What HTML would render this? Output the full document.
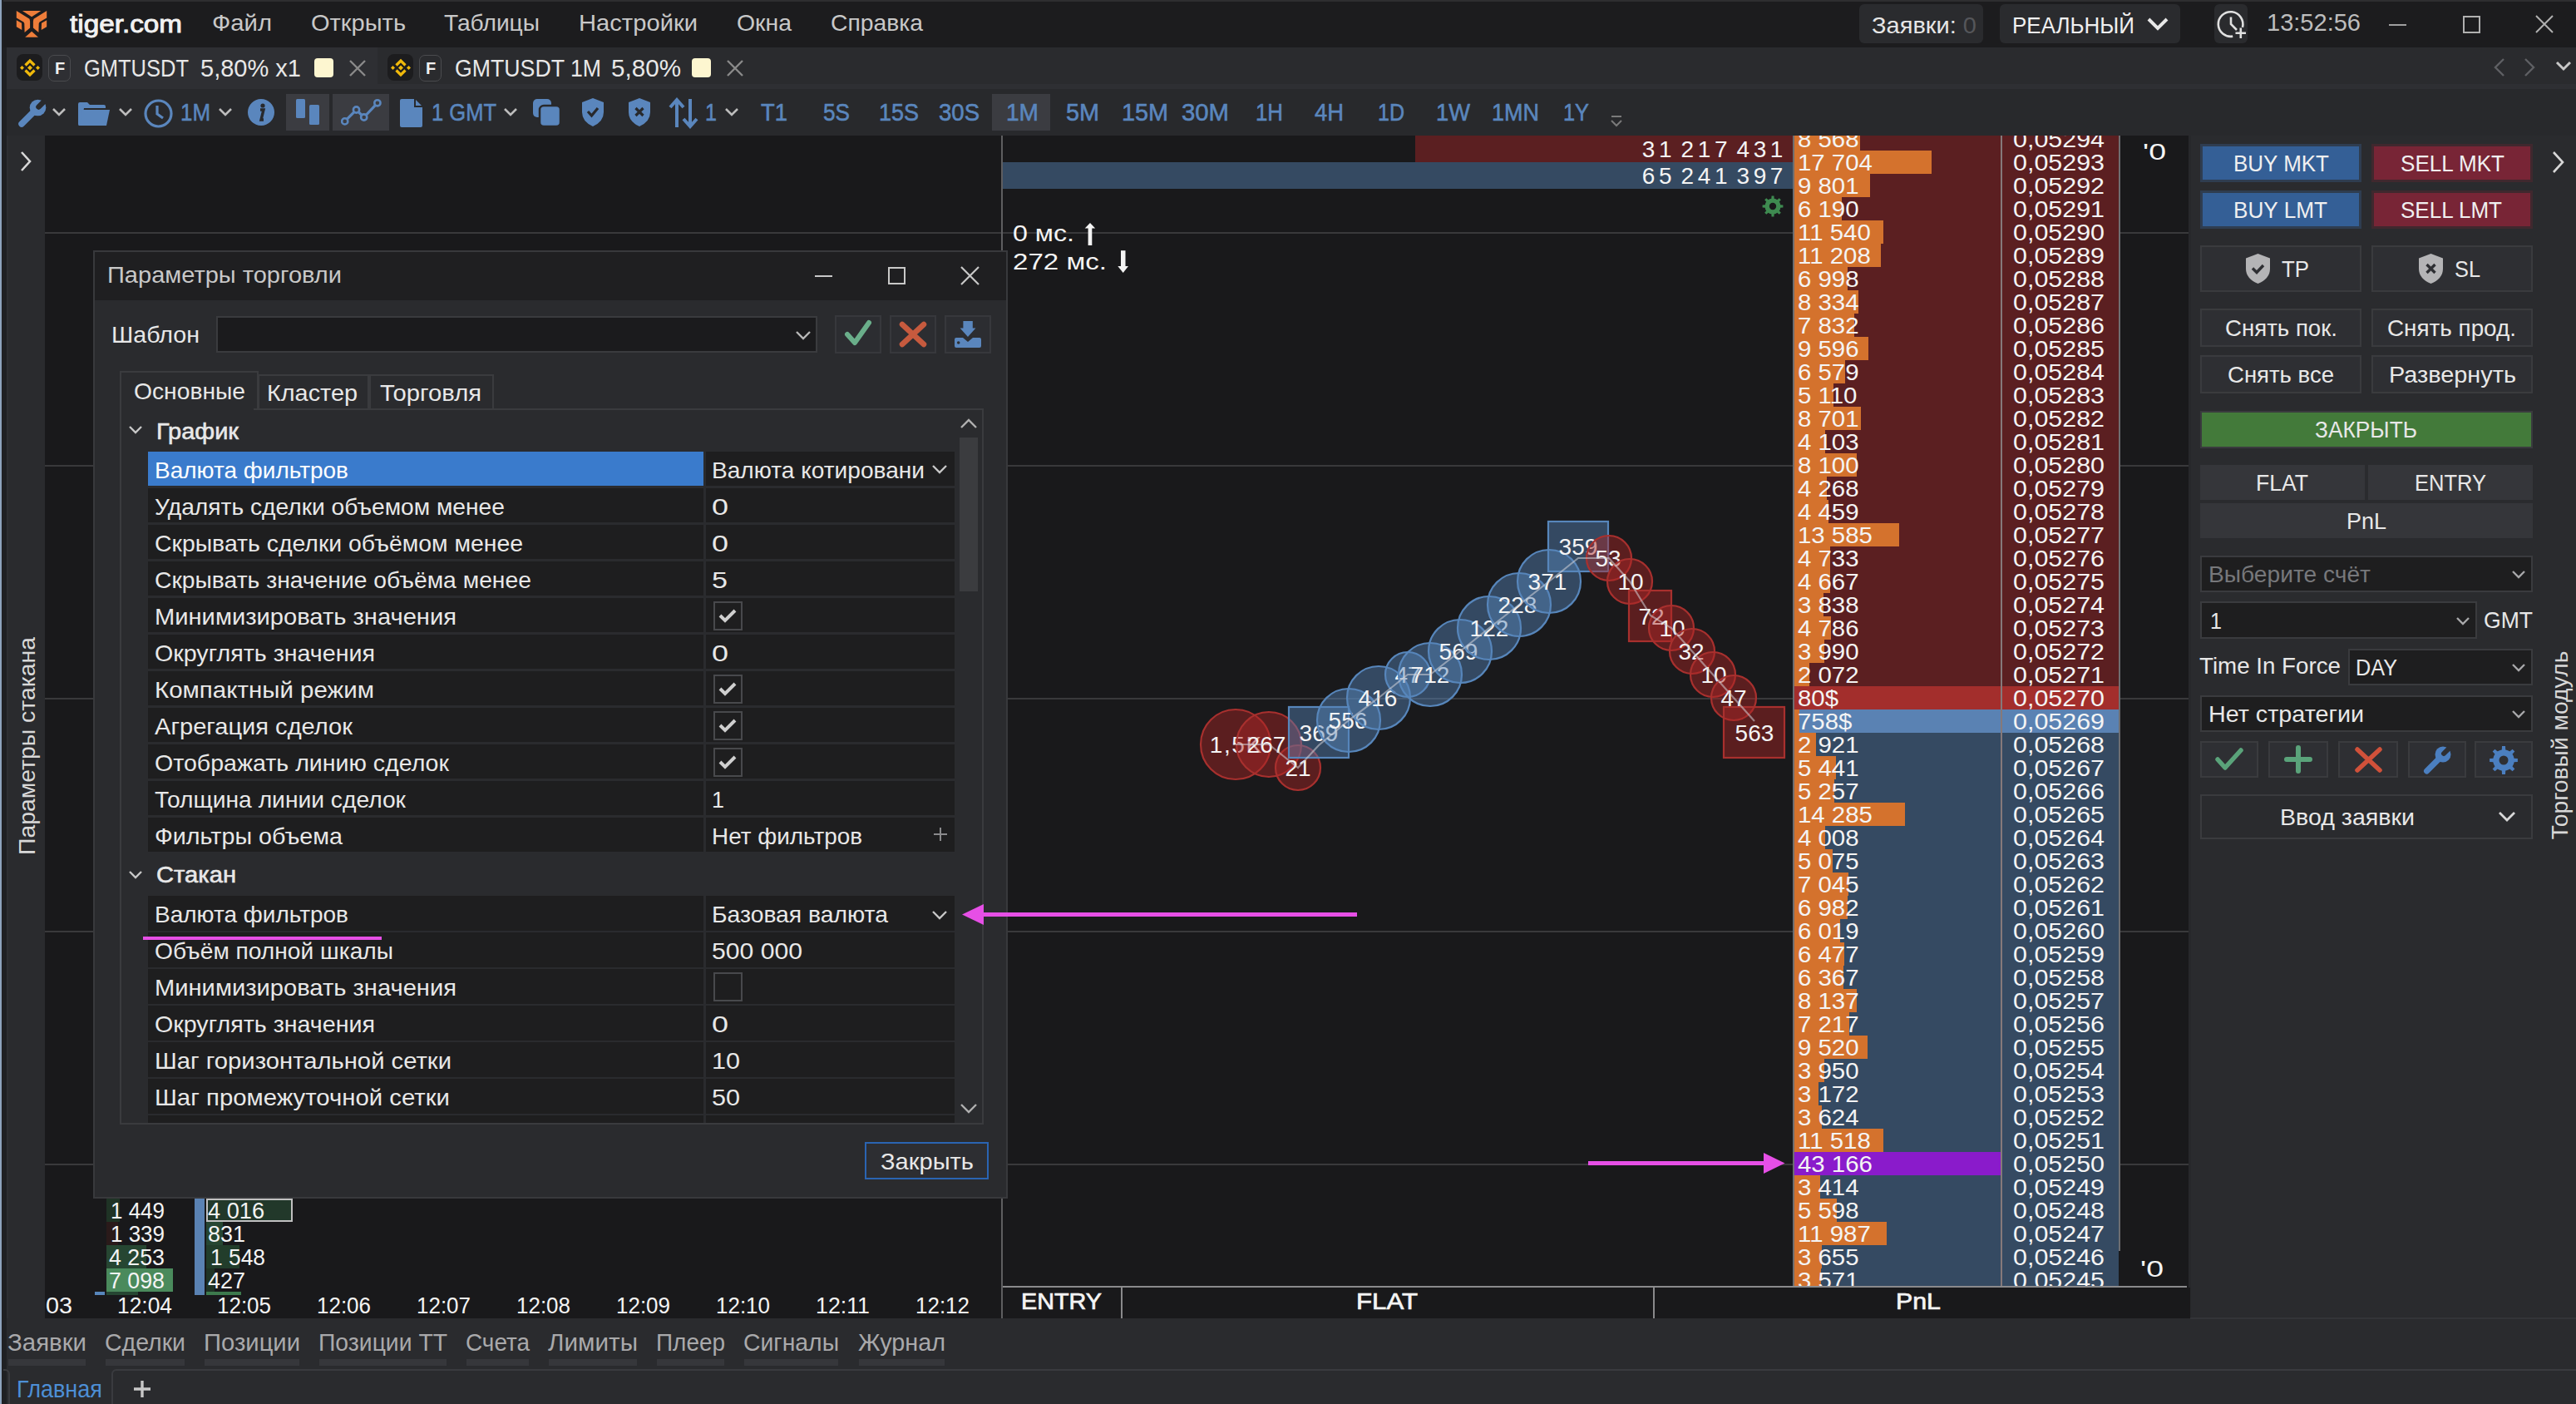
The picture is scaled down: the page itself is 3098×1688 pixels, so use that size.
<!DOCTYPE html>
<html><head><meta charset="utf-8"><title>tiger.com</title>
<style>
html,body{margin:0;padding:0;}
body{width:3098px;height:1688px;overflow:hidden;position:relative;background:#2a2b2e;font-family:"Liberation Sans",sans-serif;}
.a{position:absolute;}
.t{position:absolute;white-space:pre;line-height:1;}
.l{position:absolute;white-space:pre;line-height:1;transform:translateY(-50%);}
.r{position:absolute;white-space:pre;line-height:1;transform:translate(-100%,-50%);}
.c{position:absolute;white-space:pre;line-height:1;transform:translate(-50%,-50%);}
svg{display:block;}
</style></head><body>
<div class='a' style='left:0px;top:0px;width:2px;height:1688px;background:#8ea3bd;'></div>
<div class='a' style='left:2px;top:0px;width:6px;height:1688px;background:#1f2023;'></div>
<div class='a' style='left:4px;top:0px;width:3094px;height:57px;background:#1c1c1e;'></div>
<div class='a' style='left:4px;top:0px;width:3094px;height:2px;background:#2e2e30;'></div>
<svg class='a' style='left:14px;top:8px;' width='50' height='42' viewBox='0 0 50 42'>
<g fill='#ee7d3a'>
<path d='M12.9 4.9 L35.3 4.9 L24.1 12.3 Z'/>
<path d='M5.8 4.9 L21.5 14.7 L22.1 17.4 L22.1 25.4 L15.6 31.1 L15.3 20.3 L14.4 18.6 L5.8 13.5 Z'/>
<path d='M42.2 4.9 L26.5 14.7 L25.9 17.4 L25.9 25.4 L32.4 31.1 L32.7 20.3 L33.6 18.6 L42.2 13.5 Z'/>
<path d='M5.8 16.2 L12 19.7 L12.3 28.1 L5.8 24.2 Z'/>
<path d='M42.2 16.2 L36 19.7 L35.7 28.1 L42.2 24.2 Z'/>
<path d='M16.2 36.7 L24.1 29.8 L32 36.7 Z'/>
</g></svg>
<div class='a' style='left:84px;top:29px;font-size:29px;color:#f2f2f2;white-space:pre;line-height:1;transform-origin:0 0;transform:scaleX(1.1474) translateY(-50%);-webkit-text-stroke:0.9px #f2f2f2'>tiger.com</div>
<div class='a' style='left:255px;top:28px;font-size:28px;color:#c8c8c8;white-space:pre;line-height:1;transform-origin:0 0;transform:scaleX(1.0458) translateY(-50%);'>Файл</div>
<div class='a' style='left:374px;top:28px;font-size:28px;color:#c8c8c8;white-space:pre;line-height:1;transform-origin:0 0;transform:scaleX(1.0367) translateY(-50%);'>Открыть</div>
<div class='a' style='left:534px;top:28px;font-size:28px;color:#c8c8c8;white-space:pre;line-height:1;transform-origin:0 0;transform:scaleX(1.0057) translateY(-50%);'>Таблицы</div>
<div class='a' style='left:696px;top:28px;font-size:28px;color:#c8c8c8;white-space:pre;line-height:1;transform-origin:0 0;transform:scaleX(1.0415) translateY(-50%);'>Настройки</div>
<div class='a' style='left:886px;top:28px;font-size:28px;color:#c8c8c8;white-space:pre;line-height:1;transform-origin:0 0;transform:scaleX(1.0143) translateY(-50%);'>Окна</div>
<div class='a' style='left:999px;top:28px;font-size:28px;color:#c8c8c8;white-space:pre;line-height:1;transform-origin:0 0;transform:scaleX(1.0105) translateY(-50%);'>Справка</div>
<div class='a' style='left:2236px;top:5px;width:149px;height:47px;background:#2a2b2e;border-radius:6px'></div>
<div class='a' style='left:2251px;top:31px;font-size:28px;color:#e6e6e6;white-space:pre;line-height:1;transform-origin:0 0;transform:scaleX(1.0366) translateY(-50%);'>Заявки: <span style="color:#55565a">0</span></div>
<div class='a' style='left:2405px;top:5px;width:217px;height:47px;background:#2a2b2e;border-radius:6px'></div>
<div class='a' style='left:2420px;top:31px;font-size:28px;color:#f0f0f0;white-space:pre;line-height:1;transform-origin:0 0;transform:scaleX(0.9273) translateY(-50%);'>РЕАЛЬНЫЙ</div>
<svg class='a' style='left:2581px;top:19px;' width='28' height='20' viewBox='0 0 28 20'><path d='M3 4 L14 15 L25 4' stroke='#e8e8e8' stroke-width='4' fill='none'/></svg>
<div class='a' style='left:2663px;top:5px;width:40px;height:47px;background:#2a2b2e;border-radius:6px'></div>
<svg class='a' style='left:2664px;top:10px;' width='42' height='42' viewBox='0 0 42 42'><path d='M32.9 22.8 A14.8 14.8 0 1 0 21.2 33.6' stroke='#e0e0e0' stroke-width='2.6' fill='none'/><path d='M19 10.4 V19 L26 26' stroke='#e0e0e0' stroke-width='2.6' fill='none'/><path d='M30.8 23.5 V36 M24.5 29.8 H37' stroke='#e0e0e0' stroke-width='2.6'/></svg>
<div class='a' style='left:2726px;top:27px;font-size:29px;color:#bdbdbd;white-space:pre;line-height:1;transform-origin:0 0;transform:scaleX(1.0010) translateY(-50%);'>13:52:56</div>
<div class='a' style='left:2873px;top:29px;width:21px;height:2px;background:#a0a0a0;'></div>
<div class='a' style='left:2962px;top:19px;width:17px;height:17px;border:2px solid #b0b0b0'></div>
<svg class='a' style='left:3048px;top:17px;' width='24' height='24' viewBox='0 0 24 24'><path d='M2 2 L22 22 M22 2 L2 22' stroke='#b0b0b0' stroke-width='2'/></svg>
<div class='a' style='left:8px;top:57px;width:3090px;height:44px;background:#2a2b2e;'></div>
<div class='a' style='left:8px;top:57px;width:446px;height:44px;background:#2e2f33;'></div>
<div class='a' style='left:8px;top:101px;width:3090px;height:6px;background:#2e2f33;'></div>
<div class='a' style='left:20px;top:65px;width:31px;height:32px;background:#1c1c1e;border-radius:8px'></div>
<svg class='a' style='left:23px;top:69px;' width='26' height='25' viewBox='0 0 26 25'>
<g fill='none' stroke='#f0b90b' stroke-width='3.2' stroke-linejoin='miter'>
<path d='M7.5 9.5 L13 4 L18.5 9.5'/>
<path d='M7.5 15.5 L13 21 L18.5 15.5'/>
</g>
<g fill='#f0b90b'>
<path d='M1 12.5 L3.5 10 L6 12.5 L3.5 15 Z'/>
<path d='M25 12.5 L22.5 10 L20 12.5 L22.5 15 Z'/>
<path d='M13 9.5 L16 12.5 L13 15.5 L10 12.5 Z'/>
</g>
</svg>
<div class='a' style='left:58px;top:66px;width:25px;height:30px;border:1.5px solid #4a4b4e;border-radius:7px'></div>
<div class='c' style='left:72px;top:82px;font-size:20px;color:#f0f0f0;font-weight:bold'>F</div>
<div class='a' style='left:101px;top:82px;font-size:30px;color:#e8e8e8;white-space:pre;line-height:1;transform-origin:0 0;transform:scaleX(0.8495) translateY(-50%);'>GMTUSDT</div>
<div class='a' style='left:241px;top:82px;font-size:30px;color:#e8e8e8;white-space:pre;line-height:1;transform-origin:0 0;transform:scaleX(0.9674) translateY(-50%);'>5,80% x1</div>
<div class='a' style='left:378px;top:70px;width:23px;height:23px;background:#fdf6d0;border-radius:4px'></div>
<svg class='a' style='left:420px;top:72px;' width='20' height='20' viewBox='0 0 20 20'><path d='M1 1 L19 19 M19 1 L1 19' stroke='#8a8a8a' stroke-width='2.4'/></svg>
<div class='a' style='left:466px;top:65px;width:31px;height:32px;background:#1c1c1e;border-radius:8px'></div>
<svg class='a' style='left:469px;top:69px;' width='26' height='25' viewBox='0 0 26 25'>
<g fill='none' stroke='#f0b90b' stroke-width='3.2' stroke-linejoin='miter'>
<path d='M7.5 9.5 L13 4 L18.5 9.5'/>
<path d='M7.5 15.5 L13 21 L18.5 15.5'/>
</g>
<g fill='#f0b90b'>
<path d='M1 12.5 L3.5 10 L6 12.5 L3.5 15 Z'/>
<path d='M25 12.5 L22.5 10 L20 12.5 L22.5 15 Z'/>
<path d='M13 9.5 L16 12.5 L13 15.5 L10 12.5 Z'/>
</g>
</svg>
<div class='a' style='left:504px;top:66px;width:25px;height:30px;border:1.5px solid #4a4b4e;border-radius:7px'></div>
<div class='c' style='left:518px;top:82px;font-size:20px;color:#f0f0f0;font-weight:bold'>F</div>
<div class='a' style='left:547px;top:82px;font-size:30px;color:#e8e8e8;white-space:pre;line-height:1;transform-origin:0 0;transform:scaleX(0.8899) translateY(-50%);'>GMTUSDT 1M</div>
<div class='a' style='left:735px;top:82px;font-size:30px;color:#e8e8e8;white-space:pre;line-height:1;transform-origin:0 0;transform:scaleX(0.9875) translateY(-50%);'>5,80%</div>
<div class='a' style='left:832px;top:70px;width:23px;height:23px;background:#fdf6d0;border-radius:4px'></div>
<svg class='a' style='left:874px;top:72px;' width='20' height='20' viewBox='0 0 20 20'><path d='M1 1 L19 19 M19 1 L1 19' stroke='#8a8a8a' stroke-width='2.4'/></svg>
<svg class='a' style='left:2998px;top:69px;' width='16' height='24' viewBox='0 0 16 24'><path d='M13 2 L3 12 L13 22' stroke='#5f6064' stroke-width='2.4' fill='none'/></svg>
<svg class='a' style='left:3034px;top:69px;' width='16' height='24' viewBox='0 0 16 24'><path d='M3 2 L13 12 L3 22' stroke='#5f6064' stroke-width='2.4' fill='none'/></svg>
<svg class='a' style='left:3073px;top:73px;' width='20' height='14' viewBox='0 0 20 14'><path d='M2 2 L10 10 L18 2' stroke='#c8c8c8' stroke-width='3' fill='none'/></svg>
<div class='a' style='left:8px;top:107px;width:3090px;height:56px;background:#28292c;'></div>
<svg class='a' style='left:21px;top:118px;' width='36' height='36' viewBox='0 0 36 36'><path d='M5 31 L19 17' stroke='#5a86bd' stroke-width='7.5' stroke-linecap='round'/><circle cx='24.5' cy='11.5' r='9.8' fill='#5a86bd'/><path d='M25.5 10.5 L37 -1' stroke='#28292c' stroke-width='6.5' stroke-linecap='round'/></svg>
<svg class='a' style='left:62px;top:129px;' width='18' height='12' viewBox='0 0 18 12'><path d='M2 2 L9 9 L16 2' stroke='#bdbdbd' stroke-width='2.6' fill='none'/></svg>
<svg class='a' style='left:93px;top:121px;' width='40' height='32' viewBox='0 0 40 32'><path d='M1 4 Q1 2 3 2 L12 2 L15 5 L32 5 Q34 5 34 7 L34 9 L8 9 L4 30 L2 30 Q1 30 1 28 Z' fill='#5a86bd'/><path d='M6 11 L39 11 L35 30 L3 30 Z' fill='#5a86bd'/></svg>
<svg class='a' style='left:142px;top:129px;' width='18' height='12' viewBox='0 0 18 12'><path d='M2 2 L9 9 L16 2' stroke='#bdbdbd' stroke-width='2.6' fill='none'/></svg>
<svg class='a' style='left:172px;top:118px;' width='37' height='37' viewBox='0 0 37 37'><circle cx='18.5' cy='18.5' r='15.5' stroke='#5a86bd' stroke-width='3.2' fill='none'/><path d='M17 9 V19 L24 24' stroke='#5a86bd' stroke-width='3.2' fill='none'/></svg>
<div class='a' style='left:217px;top:135px;font-size:30px;color:#5a86bd;white-space:pre;line-height:1;transform-origin:0 0;transform:scaleX(0.8638) translateY(-50%);-webkit-text-stroke:0.6px #5a86bd'>1M</div>
<svg class='a' style='left:262px;top:129px;' width='18' height='12' viewBox='0 0 18 12'><path d='M2 2 L9 9 L16 2' stroke='#bdbdbd' stroke-width='2.6' fill='none'/></svg>
<svg class='a' style='left:297px;top:118px;' width='34' height='34' viewBox='0 0 34 34'><circle cx='17' cy='17' r='16' fill='#5a86bd'/><circle cx='19' cy='9' r='2.6' fill='#28292c'/><path d='M16 14 L20 14 L17 26 L20 26' stroke='#28292c' stroke-width='3.4' fill='none'/></svg>
<div class='a' style='left:344px;top:113px;width:52px;height:44px;background:#3b3c41;'></div>
<svg class='a' style='left:355px;top:118px;' width='32' height='34' viewBox='0 0 32 34'><rect x='1' y='1' width='11' height='23' rx='1.5' fill='#5a86bd'/><rect x='17' y='8' width='12' height='24' rx='1.5' fill='#5a86bd'/></svg>
<div class='a' style='left:400px;top:113px;width:68px;height:44px;background:#3b3c41;'></div>
<svg class='a' style='left:410px;top:117px;' width='50' height='34' viewBox='0 0 50 34'><path d='M4.7 28.9 L18.5 15 L27.7 24 L43.9 6.8' stroke='#5a86bd' stroke-width='3.2' fill='none'/><circle cx='4.7' cy='28.9' r='3.6' fill='#3b3c41' stroke='#5a86bd' stroke-width='2.6'/><circle cx='18.5' cy='15' r='3.6' fill='#3b3c41' stroke='#5a86bd' stroke-width='2.6'/><circle cx='27.7' cy='24' r='3.6' fill='#3b3c41' stroke='#5a86bd' stroke-width='2.6'/><circle cx='43.9' cy='6.8' r='3.6' fill='#3b3c41' stroke='#5a86bd' stroke-width='2.6'/></svg>
<svg class='a' style='left:480px;top:118px;' width='30' height='36' viewBox='0 0 30 36'><path d='M3 1 L19 1 L28 10 L28 33 Q28 35 26 35 L3 35 Q1 35 1 33 L1 3 Q1 1 3 1 Z' fill='#5a86bd'/><path d='M19 1 L19 10 L28 10' stroke='#28292c' stroke-width='2' fill='none'/></svg>
<div class='a' style='left:519px;top:135px;font-size:30px;color:#5a86bd;white-space:pre;line-height:1;transform-origin:0 0;transform:scaleX(0.8509) translateY(-50%);-webkit-text-stroke:0.6px #5a86bd'>1 GMT</div>
<svg class='a' style='left:605px;top:129px;' width='18' height='12' viewBox='0 0 18 12'><path d='M2 2 L9 9 L16 2' stroke='#bdbdbd' stroke-width='2.6' fill='none'/></svg>
<svg class='a' style='left:640px;top:118px;' width='35' height='35' viewBox='0 0 35 35'><rect x='1' y='1' width='22' height='22' rx='5' fill='#5a86bd'/><rect x='9' y='9' width='25' height='25' rx='5' fill='#5a86bd' stroke='#28292c' stroke-width='2.5'/></svg>
<svg class='a' style='left:699px;top:117px;' width='28' height='36' viewBox='0 0 28 36'><path d='M14 1 L27 6 L27 18 Q27 29 14 35 Q1 29 1 18 L1 6 Z' fill='#5a86bd'/><path d='M8 17 L12.5 22 L20 13' stroke='#28292c' stroke-width='3.2' fill='none'/></svg>
<svg class='a' style='left:755px;top:117px;' width='28' height='36' viewBox='0 0 28 36'><path d='M14 1 L27 6 L27 18 Q27 29 14 35 Q1 29 1 18 L1 6 Z' fill='#5a86bd'/><path d='M9.5 13 L18.5 22 M18.5 13 L9.5 22' stroke='#28292c' stroke-width='3.2'/></svg>
<svg class='a' style='left:804px;top:117px;' width='36' height='38' viewBox='0 0 36 38'><path d='M10 36 V4 M2 12 L10 3 L18 12' stroke='#5a86bd' stroke-width='4' fill='none'/><path d='M26 2 V34 M18 26 L26 35 L34 26' stroke='#5a86bd' stroke-width='4' fill='none'/></svg>
<div class='a' style='left:848px;top:135px;font-size:30px;color:#5a86bd;white-space:pre;line-height:1;transform-origin:0 0;transform:scaleX(0.8391) translateY(-50%);-webkit-text-stroke:0.6px #5a86bd'>1</div>
<svg class='a' style='left:871px;top:129px;' width='18' height='12' viewBox='0 0 18 12'><path d='M2 2 L9 9 L16 2' stroke='#bdbdbd' stroke-width='2.6' fill='none'/></svg>
<div class='a' style='left:1193px;top:113px;width:70px;height:44px;background:#3b3c41;'></div>
<div class='a' style='left:915px;top:135px;font-size:29px;color:#5a86bd;white-space:pre;line-height:1;transform-origin:0 0;transform:scaleX(0.9455) translateY(-50%);-webkit-text-stroke:0.6px #5a86bd'>T1</div>
<div class='a' style='left:990px;top:135px;font-size:29px;color:#5a86bd;white-space:pre;line-height:1;transform-origin:0 0;transform:scaleX(0.9021) translateY(-50%);-webkit-text-stroke:0.6px #5a86bd'>5S</div>
<div class='a' style='left:1057px;top:135px;font-size:29px;color:#5a86bd;white-space:pre;line-height:1;transform-origin:0 0;transform:scaleX(0.9302) translateY(-50%);-webkit-text-stroke:0.6px #5a86bd'>15S</div>
<div class='a' style='left:1129px;top:135px;font-size:29px;color:#5a86bd;white-space:pre;line-height:1;transform-origin:0 0;transform:scaleX(0.9496) translateY(-50%);-webkit-text-stroke:0.6px #5a86bd'>30S</div>
<div class='a' style='left:1210px;top:135px;font-size:29px;color:#5a86bd;white-space:pre;line-height:1;transform-origin:0 0;transform:scaleX(0.9681) translateY(-50%);-webkit-text-stroke:0.6px #5a86bd'>1M</div>
<div class='a' style='left:1282px;top:135px;font-size:29px;color:#5a86bd;white-space:pre;line-height:1;transform-origin:0 0;transform:scaleX(0.9929) translateY(-50%);-webkit-text-stroke:0.6px #5a86bd'>5M</div>
<div class='a' style='left:1349px;top:135px;font-size:29px;color:#5a86bd;white-space:pre;line-height:1;transform-origin:0 0;transform:scaleX(0.9927) translateY(-50%);-webkit-text-stroke:0.6px #5a86bd'>15M</div>
<div class='a' style='left:1421px;top:135px;font-size:29px;color:#5a86bd;white-space:pre;line-height:1;transform-origin:0 0;transform:scaleX(1.0104) translateY(-50%);-webkit-text-stroke:0.6px #5a86bd'>30M</div>
<div class='a' style='left:1510px;top:135px;font-size:29px;color:#5a86bd;white-space:pre;line-height:1;transform-origin:0 0;transform:scaleX(0.8902) translateY(-50%);-webkit-text-stroke:0.6px #5a86bd'>1H</div>
<div class='a' style='left:1581px;top:135px;font-size:29px;color:#5a86bd;white-space:pre;line-height:1;transform-origin:0 0;transform:scaleX(0.9442) translateY(-50%);-webkit-text-stroke:0.6px #5a86bd'>4H</div>
<div class='a' style='left:1657px;top:135px;font-size:29px;color:#5a86bd;white-space:pre;line-height:1;transform-origin:0 0;transform:scaleX(0.8632) translateY(-50%);-webkit-text-stroke:0.6px #5a86bd'>1D</div>
<div class='a' style='left:1727px;top:135px;font-size:29px;color:#5a86bd;white-space:pre;line-height:1;transform-origin:0 0;transform:scaleX(0.9425) translateY(-50%);-webkit-text-stroke:0.6px #5a86bd'>1W</div>
<div class='a' style='left:1794px;top:135px;font-size:29px;color:#5a86bd;white-space:pre;line-height:1;transform-origin:0 0;transform:scaleX(0.9310) translateY(-50%);-webkit-text-stroke:0.6px #5a86bd'>1MN</div>
<div class='a' style='left:1880px;top:135px;font-size:29px;color:#5a86bd;white-space:pre;line-height:1;transform-origin:0 0;transform:scaleX(0.8739) translateY(-50%);-webkit-text-stroke:0.6px #5a86bd'>1Y</div>
<svg class='a' style='left:1936px;top:138px;' width='16' height='16' viewBox='0 0 16 16'><path d='M2 2 H14' stroke='#7a7a7a' stroke-width='2'/><path d='M2 7 L8 13 L14 7' stroke='#7a7a7a' stroke-width='2' fill='none'/></svg>
<div class='a' style='left:8px;top:163px;width:46px;height:1422px;background:#2a2b2e;'></div>
<div class='a' style='left:8px;top:163px;width:2px;height:1422px;background:#2e2f33;'></div>
<svg class='a' style='left:23px;top:181px;' width='16' height='26' viewBox='0 0 16 26'><path d='M3 2 L13 13 L3 24' stroke='#d8d8d8' stroke-width='2.6' fill='none'/></svg>
<div class='a' style='left:33px;top:897px;transform:translate(-50%,-50%) rotate(-90deg) scaleX(1.05);white-space:pre;font-size:27px;line-height:1;color:#d8d8d8'>Параметры стакана</div>
<div class='a' style='left:54px;top:163px;width:1151px;height:1422px;background:#19191b;'></div>
<div class='a' style='left:54px;top:279px;width:1151px;height:2px;background:#39393b;'></div>
<div class='a' style='left:54px;top:559px;width:1151px;height:2px;background:#39393b;'></div>
<div class='a' style='left:54px;top:839px;width:1151px;height:2px;background:#39393b;'></div>
<div class='a' style='left:54px;top:1119px;width:1151px;height:2px;background:#39393b;'></div>
<div class='a' style='left:54px;top:1399px;width:1151px;height:2px;background:#39393b;'></div>
<div class='a' style='left:1205px;top:163px;width:1429px;height:1422px;background:#19191b;'></div>
<div class='a' style='left:1205px;top:279px;width:1429px;height:2px;background:#39393b;'></div>
<div class='a' style='left:1205px;top:559px;width:1429px;height:2px;background:#39393b;'></div>
<div class='a' style='left:1205px;top:839px;width:1429px;height:2px;background:#39393b;'></div>
<div class='a' style='left:1205px;top:1119px;width:1429px;height:2px;background:#39393b;'></div>
<div class='a' style='left:1205px;top:1399px;width:1429px;height:2px;background:#39393b;'></div>
<div class='a' style='left:1204px;top:163px;width:2px;height:1422px;background:#5e5e60;'></div>
<div class='a' style='left:2634px;top:163px;width:464px;height:1422px;background:#2a2b2e;'></div>
<div class='a' style='left:2632px;top:163px;width:3px;height:1422px;background:#27282b;'></div>
<div class='a' style='left:8px;top:1585px;width:3090px;height:61px;background:#2a2b2e;'></div>
<div class='a' style='left:9px;top:1614px;font-size:29px;color:#a9a9ab;white-space:pre;line-height:1;transform-origin:0 0;transform:scaleX(1.0145) translateY(-50%);'>Заявки</div>
<div class='a' style='left:10px;top:1634px;width:93px;height:8px;background:#36373b;'></div>
<div class='a' style='left:126px;top:1614px;font-size:29px;color:#a9a9ab;white-space:pre;line-height:1;transform-origin:0 0;transform:scaleX(0.9814) translateY(-50%);'>Сделки</div>
<div class='a' style='left:127px;top:1634px;width:95px;height:8px;background:#36373b;'></div>
<div class='a' style='left:245px;top:1614px;font-size:29px;color:#a9a9ab;white-space:pre;line-height:1;transform-origin:0 0;transform:scaleX(1.0074) translateY(-50%);'>Позиции</div>
<div class='a' style='left:246px;top:1634px;width:114px;height:8px;background:#36373b;'></div>
<div class='a' style='left:383px;top:1614px;font-size:29px;color:#a9a9ab;white-space:pre;line-height:1;transform-origin:0 0;transform:scaleX(0.9771) translateY(-50%);'>Позиции ТТ</div>
<div class='a' style='left:384px;top:1634px;width:153px;height:8px;background:#36373b;'></div>
<div class='a' style='left:560px;top:1614px;font-size:29px;color:#a9a9ab;white-space:pre;line-height:1;transform-origin:0 0;transform:scaleX(0.9627) translateY(-50%);'>Счета</div>
<div class='a' style='left:561px;top:1634px;width:75px;height:8px;background:#36373b;'></div>
<div class='a' style='left:659px;top:1614px;font-size:29px;color:#a9a9ab;white-space:pre;line-height:1;transform-origin:0 0;transform:scaleX(1.0238) translateY(-50%);'>Лимиты</div>
<div class='a' style='left:660px;top:1634px;width:106px;height:8px;background:#36373b;'></div>
<div class='a' style='left:789px;top:1614px;font-size:29px;color:#a9a9ab;white-space:pre;line-height:1;transform-origin:0 0;transform:scaleX(0.9634) translateY(-50%);'>Плеер</div>
<div class='a' style='left:790px;top:1634px;width:81px;height:8px;background:#36373b;'></div>
<div class='a' style='left:894px;top:1614px;font-size:29px;color:#a9a9ab;white-space:pre;line-height:1;transform-origin:0 0;transform:scaleX(0.9777) translateY(-50%);'>Сигналы</div>
<div class='a' style='left:895px;top:1634px;width:113px;height:8px;background:#36373b;'></div>
<div class='a' style='left:1032px;top:1614px;font-size:29px;color:#a9a9ab;white-space:pre;line-height:1;transform-origin:0 0;transform:scaleX(0.9922) translateY(-50%);'>Журнал</div>
<div class='a' style='left:1033px;top:1634px;width:103px;height:8px;background:#36373b;'></div>
<div class='a' style='left:8px;top:1648px;width:3090px;height:40px;background:#2a2b2e;'></div>
<div class='a' style='left:134px;top:1646px;width:2980px;height:60px;border:2px solid #3a3b3f;border-radius:6px 0 0 0'></div>
<div class='a' style='left:-80px;top:1646px;width:88px;height:60px;border:2px solid #3a3b3f;border-radius:0 6px 0 0'></div>
<div class='a' style='left:20px;top:1670px;font-size:29px;color:#4d8fd6;white-space:pre;line-height:1;transform-origin:0 0;transform:scaleX(0.9331) translateY(-50%);'>Главная</div>
<svg class='a' style='left:159px;top:1658px;' width='24' height='24' viewBox='0 0 24 24'><path d='M12 2 V22 M2 12 H22' stroke='#c8c8c8' stroke-width='3.4'/></svg>
<div class='a' style='left:2150px;top:163px;width:410px;height:1383px;overflow:hidden'>
<div class='a' style='left:7px;top:-9.7px;width:391px;height:28px;background:#5b1f21'></div>
<div class='a' style='left:7px;top:-9.7px;width:80.1px;height:28px;background:#d4722d'></div>
<div class='a' style='left:12px;top:4.8px;font-size:28px;color:#f4f4f4;white-space:pre;line-height:1;transform-origin:0 0;transform:scaleX(1.05) translateY(-50%)'>8 568</div>
<div class='a' style='left:271px;top:4.8px;font-size:28px;color:#f4f4f4;white-space:pre;line-height:1;transform-origin:0 0;transform:scaleX(1.0867) translateY(-50%)'>0,05294</div>
<div class='a' style='left:7px;top:18.3px;width:391px;height:28px;background:#5b1f21'></div>
<div class='a' style='left:7px;top:18.3px;width:165.5px;height:28px;background:#d4722d'></div>
<div class='a' style='left:12px;top:32.8px;font-size:28px;color:#f4f4f4;white-space:pre;line-height:1;transform-origin:0 0;transform:scaleX(1.05) translateY(-50%)'>17 704</div>
<div class='a' style='left:271px;top:32.8px;font-size:28px;color:#f4f4f4;white-space:pre;line-height:1;transform-origin:0 0;transform:scaleX(1.0867) translateY(-50%)'>0,05293</div>
<div class='a' style='left:7px;top:46.3px;width:391px;height:28px;background:#5b1f21'></div>
<div class='a' style='left:7px;top:46.3px;width:91.6px;height:28px;background:#d4722d'></div>
<div class='a' style='left:12px;top:60.8px;font-size:28px;color:#f4f4f4;white-space:pre;line-height:1;transform-origin:0 0;transform:scaleX(1.05) translateY(-50%)'>9 801</div>
<div class='a' style='left:271px;top:60.8px;font-size:28px;color:#f4f4f4;white-space:pre;line-height:1;transform-origin:0 0;transform:scaleX(1.0867) translateY(-50%)'>0,05292</div>
<div class='a' style='left:7px;top:74.3px;width:391px;height:28px;background:#5b1f21'></div>
<div class='a' style='left:7px;top:74.3px;width:57.9px;height:28px;background:#d4722d'></div>
<div class='a' style='left:12px;top:88.8px;font-size:28px;color:#f4f4f4;white-space:pre;line-height:1;transform-origin:0 0;transform:scaleX(1.05) translateY(-50%)'>6 190</div>
<div class='a' style='left:271px;top:88.8px;font-size:28px;color:#f4f4f4;white-space:pre;line-height:1;transform-origin:0 0;transform:scaleX(1.0867) translateY(-50%)'>0,05291</div>
<div class='a' style='left:7px;top:102.3px;width:391px;height:28px;background:#5b1f21'></div>
<div class='a' style='left:7px;top:102.3px;width:107.9px;height:28px;background:#d4722d'></div>
<div class='a' style='left:12px;top:116.8px;font-size:28px;color:#f4f4f4;white-space:pre;line-height:1;transform-origin:0 0;transform:scaleX(1.05) translateY(-50%)'>11 540</div>
<div class='a' style='left:271px;top:116.8px;font-size:28px;color:#f4f4f4;white-space:pre;line-height:1;transform-origin:0 0;transform:scaleX(1.0867) translateY(-50%)'>0,05290</div>
<div class='a' style='left:7px;top:130.3px;width:391px;height:28px;background:#5b1f21'></div>
<div class='a' style='left:7px;top:130.3px;width:104.7px;height:28px;background:#d4722d'></div>
<div class='a' style='left:12px;top:144.8px;font-size:28px;color:#f4f4f4;white-space:pre;line-height:1;transform-origin:0 0;transform:scaleX(1.05) translateY(-50%)'>11 208</div>
<div class='a' style='left:271px;top:144.8px;font-size:28px;color:#f4f4f4;white-space:pre;line-height:1;transform-origin:0 0;transform:scaleX(1.0867) translateY(-50%)'>0,05289</div>
<div class='a' style='left:7px;top:158.3px;width:391px;height:28px;background:#5b1f21'></div>
<div class='a' style='left:7px;top:158.3px;width:65.4px;height:28px;background:#d4722d'></div>
<div class='a' style='left:12px;top:172.8px;font-size:28px;color:#f4f4f4;white-space:pre;line-height:1;transform-origin:0 0;transform:scaleX(1.05) translateY(-50%)'>6 998</div>
<div class='a' style='left:271px;top:172.8px;font-size:28px;color:#f4f4f4;white-space:pre;line-height:1;transform-origin:0 0;transform:scaleX(1.0867) translateY(-50%)'>0,05288</div>
<div class='a' style='left:7px;top:186.3px;width:391px;height:28px;background:#5b1f21'></div>
<div class='a' style='left:7px;top:186.3px;width:77.9px;height:28px;background:#d4722d'></div>
<div class='a' style='left:12px;top:200.8px;font-size:28px;color:#f4f4f4;white-space:pre;line-height:1;transform-origin:0 0;transform:scaleX(1.05) translateY(-50%)'>8 334</div>
<div class='a' style='left:271px;top:200.8px;font-size:28px;color:#f4f4f4;white-space:pre;line-height:1;transform-origin:0 0;transform:scaleX(1.0867) translateY(-50%)'>0,05287</div>
<div class='a' style='left:7px;top:214.3px;width:391px;height:28px;background:#5b1f21'></div>
<div class='a' style='left:7px;top:214.3px;width:73.2px;height:28px;background:#d4722d'></div>
<div class='a' style='left:12px;top:228.8px;font-size:28px;color:#f4f4f4;white-space:pre;line-height:1;transform-origin:0 0;transform:scaleX(1.05) translateY(-50%)'>7 832</div>
<div class='a' style='left:271px;top:228.8px;font-size:28px;color:#f4f4f4;white-space:pre;line-height:1;transform-origin:0 0;transform:scaleX(1.0867) translateY(-50%)'>0,05286</div>
<div class='a' style='left:7px;top:242.3px;width:391px;height:28px;background:#5b1f21'></div>
<div class='a' style='left:7px;top:242.3px;width:89.7px;height:28px;background:#d4722d'></div>
<div class='a' style='left:12px;top:256.8px;font-size:28px;color:#f4f4f4;white-space:pre;line-height:1;transform-origin:0 0;transform:scaleX(1.05) translateY(-50%)'>9 596</div>
<div class='a' style='left:271px;top:256.8px;font-size:28px;color:#f4f4f4;white-space:pre;line-height:1;transform-origin:0 0;transform:scaleX(1.0867) translateY(-50%)'>0,05285</div>
<div class='a' style='left:7px;top:270.3px;width:391px;height:28px;background:#5b1f21'></div>
<div class='a' style='left:7px;top:270.3px;width:61.5px;height:28px;background:#d4722d'></div>
<div class='a' style='left:12px;top:284.8px;font-size:28px;color:#f4f4f4;white-space:pre;line-height:1;transform-origin:0 0;transform:scaleX(1.05) translateY(-50%)'>6 579</div>
<div class='a' style='left:271px;top:284.8px;font-size:28px;color:#f4f4f4;white-space:pre;line-height:1;transform-origin:0 0;transform:scaleX(1.0867) translateY(-50%)'>0,05284</div>
<div class='a' style='left:7px;top:298.3px;width:391px;height:28px;background:#5b1f21'></div>
<div class='a' style='left:7px;top:298.3px;width:47.8px;height:28px;background:#d4722d'></div>
<div class='a' style='left:12px;top:312.8px;font-size:28px;color:#f4f4f4;white-space:pre;line-height:1;transform-origin:0 0;transform:scaleX(1.05) translateY(-50%)'>5 110</div>
<div class='a' style='left:271px;top:312.8px;font-size:28px;color:#f4f4f4;white-space:pre;line-height:1;transform-origin:0 0;transform:scaleX(1.0867) translateY(-50%)'>0,05283</div>
<div class='a' style='left:7px;top:326.3px;width:391px;height:28px;background:#5b1f21'></div>
<div class='a' style='left:7px;top:326.3px;width:81.3px;height:28px;background:#d4722d'></div>
<div class='a' style='left:12px;top:340.8px;font-size:28px;color:#f4f4f4;white-space:pre;line-height:1;transform-origin:0 0;transform:scaleX(1.05) translateY(-50%)'>8 701</div>
<div class='a' style='left:271px;top:340.8px;font-size:28px;color:#f4f4f4;white-space:pre;line-height:1;transform-origin:0 0;transform:scaleX(1.0867) translateY(-50%)'>0,05282</div>
<div class='a' style='left:7px;top:354.3px;width:391px;height:28px;background:#5b1f21'></div>
<div class='a' style='left:7px;top:354.3px;width:38.3px;height:28px;background:#d4722d'></div>
<div class='a' style='left:12px;top:368.8px;font-size:28px;color:#f4f4f4;white-space:pre;line-height:1;transform-origin:0 0;transform:scaleX(1.05) translateY(-50%)'>4 103</div>
<div class='a' style='left:271px;top:368.8px;font-size:28px;color:#f4f4f4;white-space:pre;line-height:1;transform-origin:0 0;transform:scaleX(1.0867) translateY(-50%)'>0,05281</div>
<div class='a' style='left:7px;top:382.3px;width:391px;height:28px;background:#5b1f21'></div>
<div class='a' style='left:7px;top:382.3px;width:75.7px;height:28px;background:#d4722d'></div>
<div class='a' style='left:12px;top:396.8px;font-size:28px;color:#f4f4f4;white-space:pre;line-height:1;transform-origin:0 0;transform:scaleX(1.05) translateY(-50%)'>8 100</div>
<div class='a' style='left:271px;top:396.8px;font-size:28px;color:#f4f4f4;white-space:pre;line-height:1;transform-origin:0 0;transform:scaleX(1.0867) translateY(-50%)'>0,05280</div>
<div class='a' style='left:7px;top:410.3px;width:391px;height:28px;background:#5b1f21'></div>
<div class='a' style='left:7px;top:410.3px;width:39.9px;height:28px;background:#d4722d'></div>
<div class='a' style='left:12px;top:424.8px;font-size:28px;color:#f4f4f4;white-space:pre;line-height:1;transform-origin:0 0;transform:scaleX(1.05) translateY(-50%)'>4 268</div>
<div class='a' style='left:271px;top:424.8px;font-size:28px;color:#f4f4f4;white-space:pre;line-height:1;transform-origin:0 0;transform:scaleX(1.0867) translateY(-50%)'>0,05279</div>
<div class='a' style='left:7px;top:438.3px;width:391px;height:28px;background:#5b1f21'></div>
<div class='a' style='left:7px;top:438.3px;width:41.7px;height:28px;background:#d4722d'></div>
<div class='a' style='left:12px;top:452.8px;font-size:28px;color:#f4f4f4;white-space:pre;line-height:1;transform-origin:0 0;transform:scaleX(1.05) translateY(-50%)'>4 459</div>
<div class='a' style='left:271px;top:452.8px;font-size:28px;color:#f4f4f4;white-space:pre;line-height:1;transform-origin:0 0;transform:scaleX(1.0867) translateY(-50%)'>0,05278</div>
<div class='a' style='left:7px;top:466.3px;width:391px;height:28px;background:#5b1f21'></div>
<div class='a' style='left:7px;top:466.3px;width:127.0px;height:28px;background:#d4722d'></div>
<div class='a' style='left:12px;top:480.8px;font-size:28px;color:#f4f4f4;white-space:pre;line-height:1;transform-origin:0 0;transform:scaleX(1.05) translateY(-50%)'>13 585</div>
<div class='a' style='left:271px;top:480.8px;font-size:28px;color:#f4f4f4;white-space:pre;line-height:1;transform-origin:0 0;transform:scaleX(1.0867) translateY(-50%)'>0,05277</div>
<div class='a' style='left:7px;top:494.3px;width:391px;height:28px;background:#5b1f21'></div>
<div class='a' style='left:7px;top:494.3px;width:44.2px;height:28px;background:#d4722d'></div>
<div class='a' style='left:12px;top:508.8px;font-size:28px;color:#f4f4f4;white-space:pre;line-height:1;transform-origin:0 0;transform:scaleX(1.05) translateY(-50%)'>4 733</div>
<div class='a' style='left:271px;top:508.8px;font-size:28px;color:#f4f4f4;white-space:pre;line-height:1;transform-origin:0 0;transform:scaleX(1.0867) translateY(-50%)'>0,05276</div>
<div class='a' style='left:7px;top:522.3px;width:391px;height:28px;background:#5b1f21'></div>
<div class='a' style='left:7px;top:522.3px;width:43.6px;height:28px;background:#d4722d'></div>
<div class='a' style='left:12px;top:536.8px;font-size:28px;color:#f4f4f4;white-space:pre;line-height:1;transform-origin:0 0;transform:scaleX(1.05) translateY(-50%)'>4 667</div>
<div class='a' style='left:271px;top:536.8px;font-size:28px;color:#f4f4f4;white-space:pre;line-height:1;transform-origin:0 0;transform:scaleX(1.0867) translateY(-50%)'>0,05275</div>
<div class='a' style='left:7px;top:550.3px;width:391px;height:28px;background:#5b1f21'></div>
<div class='a' style='left:7px;top:550.3px;width:35.9px;height:28px;background:#d4722d'></div>
<div class='a' style='left:12px;top:564.8px;font-size:28px;color:#f4f4f4;white-space:pre;line-height:1;transform-origin:0 0;transform:scaleX(1.05) translateY(-50%)'>3 838</div>
<div class='a' style='left:271px;top:564.8px;font-size:28px;color:#f4f4f4;white-space:pre;line-height:1;transform-origin:0 0;transform:scaleX(1.0867) translateY(-50%)'>0,05274</div>
<div class='a' style='left:7px;top:578.3px;width:391px;height:28px;background:#5b1f21'></div>
<div class='a' style='left:7px;top:578.3px;width:44.7px;height:28px;background:#d4722d'></div>
<div class='a' style='left:12px;top:592.8px;font-size:28px;color:#f4f4f4;white-space:pre;line-height:1;transform-origin:0 0;transform:scaleX(1.05) translateY(-50%)'>4 786</div>
<div class='a' style='left:271px;top:592.8px;font-size:28px;color:#f4f4f4;white-space:pre;line-height:1;transform-origin:0 0;transform:scaleX(1.0867) translateY(-50%)'>0,05273</div>
<div class='a' style='left:7px;top:606.3px;width:391px;height:28px;background:#5b1f21'></div>
<div class='a' style='left:7px;top:606.3px;width:37.3px;height:28px;background:#d4722d'></div>
<div class='a' style='left:12px;top:620.8px;font-size:28px;color:#f4f4f4;white-space:pre;line-height:1;transform-origin:0 0;transform:scaleX(1.05) translateY(-50%)'>3 990</div>
<div class='a' style='left:271px;top:620.8px;font-size:28px;color:#f4f4f4;white-space:pre;line-height:1;transform-origin:0 0;transform:scaleX(1.0867) translateY(-50%)'>0,05272</div>
<div class='a' style='left:7px;top:634.3px;width:391px;height:28px;background:#5b1f21'></div>
<div class='a' style='left:7px;top:634.3px;width:19.4px;height:28px;background:#d4722d'></div>
<div class='a' style='left:12px;top:648.8px;font-size:28px;color:#f4f4f4;white-space:pre;line-height:1;transform-origin:0 0;transform:scaleX(1.05) translateY(-50%)'>2 072</div>
<div class='a' style='left:271px;top:648.8px;font-size:28px;color:#f4f4f4;white-space:pre;line-height:1;transform-origin:0 0;transform:scaleX(1.0867) translateY(-50%)'>0,05271</div>
<div class='a' style='left:7px;top:662.3px;width:391px;height:28px;background:#a32e2c'></div>
<div class='a' style='left:12px;top:676.8px;font-size:28px;color:#f4f4f4;white-space:pre;line-height:1;transform-origin:0 0;transform:scaleX(1.05) translateY(-50%)'>80$</div>
<div class='a' style='left:271px;top:676.8px;font-size:28px;color:#f4f4f4;white-space:pre;line-height:1;transform-origin:0 0;transform:scaleX(1.0867) translateY(-50%)'>0,05270</div>
<div class='a' style='left:7px;top:690.3px;width:391px;height:28px;background:#5a82b3'></div>
<div class='a' style='left:7px;top:690.3px;width:7.1px;height:28px;background:#d4722d'></div>
<div class='a' style='left:12px;top:704.8px;font-size:28px;color:#f4f4f4;white-space:pre;line-height:1;transform-origin:0 0;transform:scaleX(1.05) translateY(-50%)'>758$</div>
<div class='a' style='left:271px;top:704.8px;font-size:28px;color:#f4f4f4;white-space:pre;line-height:1;transform-origin:0 0;transform:scaleX(1.0867) translateY(-50%)'>0,05269</div>
<div class='a' style='left:7px;top:718.3px;width:391px;height:28px;background:#354a62'></div>
<div class='a' style='left:7px;top:718.3px;width:27.3px;height:28px;background:#d4722d'></div>
<div class='a' style='left:12px;top:732.8px;font-size:28px;color:#f4f4f4;white-space:pre;line-height:1;transform-origin:0 0;transform:scaleX(1.05) translateY(-50%)'>2 921</div>
<div class='a' style='left:271px;top:732.8px;font-size:28px;color:#f4f4f4;white-space:pre;line-height:1;transform-origin:0 0;transform:scaleX(1.0867) translateY(-50%)'>0,05268</div>
<div class='a' style='left:7px;top:746.3px;width:391px;height:28px;background:#354a62'></div>
<div class='a' style='left:7px;top:746.3px;width:50.9px;height:28px;background:#d4722d'></div>
<div class='a' style='left:12px;top:760.8px;font-size:28px;color:#f4f4f4;white-space:pre;line-height:1;transform-origin:0 0;transform:scaleX(1.05) translateY(-50%)'>5 441</div>
<div class='a' style='left:271px;top:760.8px;font-size:28px;color:#f4f4f4;white-space:pre;line-height:1;transform-origin:0 0;transform:scaleX(1.0867) translateY(-50%)'>0,05267</div>
<div class='a' style='left:7px;top:774.3px;width:391px;height:28px;background:#354a62'></div>
<div class='a' style='left:7px;top:774.3px;width:49.1px;height:28px;background:#d4722d'></div>
<div class='a' style='left:12px;top:788.8px;font-size:28px;color:#f4f4f4;white-space:pre;line-height:1;transform-origin:0 0;transform:scaleX(1.05) translateY(-50%)'>5 257</div>
<div class='a' style='left:271px;top:788.8px;font-size:28px;color:#f4f4f4;white-space:pre;line-height:1;transform-origin:0 0;transform:scaleX(1.0867) translateY(-50%)'>0,05266</div>
<div class='a' style='left:7px;top:802.3px;width:391px;height:28px;background:#354a62'></div>
<div class='a' style='left:7px;top:802.3px;width:133.5px;height:28px;background:#d4722d'></div>
<div class='a' style='left:12px;top:816.8px;font-size:28px;color:#f4f4f4;white-space:pre;line-height:1;transform-origin:0 0;transform:scaleX(1.05) translateY(-50%)'>14 285</div>
<div class='a' style='left:271px;top:816.8px;font-size:28px;color:#f4f4f4;white-space:pre;line-height:1;transform-origin:0 0;transform:scaleX(1.0867) translateY(-50%)'>0,05265</div>
<div class='a' style='left:7px;top:830.3px;width:391px;height:28px;background:#354a62'></div>
<div class='a' style='left:7px;top:830.3px;width:37.5px;height:28px;background:#d4722d'></div>
<div class='a' style='left:12px;top:844.8px;font-size:28px;color:#f4f4f4;white-space:pre;line-height:1;transform-origin:0 0;transform:scaleX(1.05) translateY(-50%)'>4 008</div>
<div class='a' style='left:271px;top:844.8px;font-size:28px;color:#f4f4f4;white-space:pre;line-height:1;transform-origin:0 0;transform:scaleX(1.0867) translateY(-50%)'>0,05264</div>
<div class='a' style='left:7px;top:858.3px;width:391px;height:28px;background:#354a62'></div>
<div class='a' style='left:7px;top:858.3px;width:47.4px;height:28px;background:#d4722d'></div>
<div class='a' style='left:12px;top:872.8px;font-size:28px;color:#f4f4f4;white-space:pre;line-height:1;transform-origin:0 0;transform:scaleX(1.05) translateY(-50%)'>5 075</div>
<div class='a' style='left:271px;top:872.8px;font-size:28px;color:#f4f4f4;white-space:pre;line-height:1;transform-origin:0 0;transform:scaleX(1.0867) translateY(-50%)'>0,05263</div>
<div class='a' style='left:7px;top:886.3px;width:391px;height:28px;background:#354a62'></div>
<div class='a' style='left:7px;top:886.3px;width:65.8px;height:28px;background:#d4722d'></div>
<div class='a' style='left:12px;top:900.8px;font-size:28px;color:#f4f4f4;white-space:pre;line-height:1;transform-origin:0 0;transform:scaleX(1.05) translateY(-50%)'>7 045</div>
<div class='a' style='left:271px;top:900.8px;font-size:28px;color:#f4f4f4;white-space:pre;line-height:1;transform-origin:0 0;transform:scaleX(1.0867) translateY(-50%)'>0,05262</div>
<div class='a' style='left:7px;top:914.3px;width:391px;height:28px;background:#354a62'></div>
<div class='a' style='left:7px;top:914.3px;width:65.3px;height:28px;background:#d4722d'></div>
<div class='a' style='left:12px;top:928.8px;font-size:28px;color:#f4f4f4;white-space:pre;line-height:1;transform-origin:0 0;transform:scaleX(1.05) translateY(-50%)'>6 982</div>
<div class='a' style='left:271px;top:928.8px;font-size:28px;color:#f4f4f4;white-space:pre;line-height:1;transform-origin:0 0;transform:scaleX(1.0867) translateY(-50%)'>0,05261</div>
<div class='a' style='left:7px;top:942.3px;width:391px;height:28px;background:#354a62'></div>
<div class='a' style='left:7px;top:942.3px;width:56.3px;height:28px;background:#d4722d'></div>
<div class='a' style='left:12px;top:956.8px;font-size:28px;color:#f4f4f4;white-space:pre;line-height:1;transform-origin:0 0;transform:scaleX(1.05) translateY(-50%)'>6 019</div>
<div class='a' style='left:271px;top:956.8px;font-size:28px;color:#f4f4f4;white-space:pre;line-height:1;transform-origin:0 0;transform:scaleX(1.0867) translateY(-50%)'>0,05260</div>
<div class='a' style='left:7px;top:970.3px;width:391px;height:28px;background:#354a62'></div>
<div class='a' style='left:7px;top:970.3px;width:60.5px;height:28px;background:#d4722d'></div>
<div class='a' style='left:12px;top:984.8px;font-size:28px;color:#f4f4f4;white-space:pre;line-height:1;transform-origin:0 0;transform:scaleX(1.05) translateY(-50%)'>6 477</div>
<div class='a' style='left:271px;top:984.8px;font-size:28px;color:#f4f4f4;white-space:pre;line-height:1;transform-origin:0 0;transform:scaleX(1.0867) translateY(-50%)'>0,05259</div>
<div class='a' style='left:7px;top:998.3px;width:391px;height:28px;background:#354a62'></div>
<div class='a' style='left:7px;top:998.3px;width:59.5px;height:28px;background:#d4722d'></div>
<div class='a' style='left:12px;top:1012.8px;font-size:28px;color:#f4f4f4;white-space:pre;line-height:1;transform-origin:0 0;transform:scaleX(1.05) translateY(-50%)'>6 367</div>
<div class='a' style='left:271px;top:1012.8px;font-size:28px;color:#f4f4f4;white-space:pre;line-height:1;transform-origin:0 0;transform:scaleX(1.0867) translateY(-50%)'>0,05258</div>
<div class='a' style='left:7px;top:1026.3px;width:391px;height:28px;background:#354a62'></div>
<div class='a' style='left:7px;top:1026.3px;width:76.0px;height:28px;background:#d4722d'></div>
<div class='a' style='left:12px;top:1040.8px;font-size:28px;color:#f4f4f4;white-space:pre;line-height:1;transform-origin:0 0;transform:scaleX(1.05) translateY(-50%)'>8 137</div>
<div class='a' style='left:271px;top:1040.8px;font-size:28px;color:#f4f4f4;white-space:pre;line-height:1;transform-origin:0 0;transform:scaleX(1.0867) translateY(-50%)'>0,05257</div>
<div class='a' style='left:7px;top:1054.3px;width:391px;height:28px;background:#354a62'></div>
<div class='a' style='left:7px;top:1054.3px;width:67.4px;height:28px;background:#d4722d'></div>
<div class='a' style='left:12px;top:1068.8px;font-size:28px;color:#f4f4f4;white-space:pre;line-height:1;transform-origin:0 0;transform:scaleX(1.05) translateY(-50%)'>7 217</div>
<div class='a' style='left:271px;top:1068.8px;font-size:28px;color:#f4f4f4;white-space:pre;line-height:1;transform-origin:0 0;transform:scaleX(1.0867) translateY(-50%)'>0,05256</div>
<div class='a' style='left:7px;top:1082.3px;width:391px;height:28px;background:#354a62'></div>
<div class='a' style='left:7px;top:1082.3px;width:89.0px;height:28px;background:#d4722d'></div>
<div class='a' style='left:12px;top:1096.8px;font-size:28px;color:#f4f4f4;white-space:pre;line-height:1;transform-origin:0 0;transform:scaleX(1.05) translateY(-50%)'>9 520</div>
<div class='a' style='left:271px;top:1096.8px;font-size:28px;color:#f4f4f4;white-space:pre;line-height:1;transform-origin:0 0;transform:scaleX(1.0867) translateY(-50%)'>0,05255</div>
<div class='a' style='left:7px;top:1110.3px;width:391px;height:28px;background:#354a62'></div>
<div class='a' style='left:7px;top:1110.3px;width:36.9px;height:28px;background:#d4722d'></div>
<div class='a' style='left:12px;top:1124.8px;font-size:28px;color:#f4f4f4;white-space:pre;line-height:1;transform-origin:0 0;transform:scaleX(1.05) translateY(-50%)'>3 950</div>
<div class='a' style='left:271px;top:1124.8px;font-size:28px;color:#f4f4f4;white-space:pre;line-height:1;transform-origin:0 0;transform:scaleX(1.0867) translateY(-50%)'>0,05254</div>
<div class='a' style='left:7px;top:1138.3px;width:391px;height:28px;background:#354a62'></div>
<div class='a' style='left:7px;top:1138.3px;width:29.6px;height:28px;background:#d4722d'></div>
<div class='a' style='left:12px;top:1152.8px;font-size:28px;color:#f4f4f4;white-space:pre;line-height:1;transform-origin:0 0;transform:scaleX(1.05) translateY(-50%)'>3 172</div>
<div class='a' style='left:271px;top:1152.8px;font-size:28px;color:#f4f4f4;white-space:pre;line-height:1;transform-origin:0 0;transform:scaleX(1.0867) translateY(-50%)'>0,05253</div>
<div class='a' style='left:7px;top:1166.3px;width:391px;height:28px;background:#354a62'></div>
<div class='a' style='left:7px;top:1166.3px;width:33.9px;height:28px;background:#d4722d'></div>
<div class='a' style='left:12px;top:1180.8px;font-size:28px;color:#f4f4f4;white-space:pre;line-height:1;transform-origin:0 0;transform:scaleX(1.05) translateY(-50%)'>3 624</div>
<div class='a' style='left:271px;top:1180.8px;font-size:28px;color:#f4f4f4;white-space:pre;line-height:1;transform-origin:0 0;transform:scaleX(1.0867) translateY(-50%)'>0,05252</div>
<div class='a' style='left:7px;top:1194.3px;width:391px;height:28px;background:#354a62'></div>
<div class='a' style='left:7px;top:1194.3px;width:107.6px;height:28px;background:#d4722d'></div>
<div class='a' style='left:12px;top:1208.8px;font-size:28px;color:#f4f4f4;white-space:pre;line-height:1;transform-origin:0 0;transform:scaleX(1.05) translateY(-50%)'>11 518</div>
<div class='a' style='left:271px;top:1208.8px;font-size:28px;color:#f4f4f4;white-space:pre;line-height:1;transform-origin:0 0;transform:scaleX(1.0867) translateY(-50%)'>0,05251</div>
<div class='a' style='left:7px;top:1222.3px;width:391px;height:28px;background:#354a62'></div>
<div class='a' style='left:7px;top:1222.3px;width:249px;height:28px;background:#8a1bcb'></div>
<div class='a' style='left:12px;top:1236.8px;font-size:28px;color:#f4f4f4;white-space:pre;line-height:1;transform-origin:0 0;transform:scaleX(1.05) translateY(-50%)'>43 166</div>
<div class='a' style='left:271px;top:1236.8px;font-size:28px;color:#f4f4f4;white-space:pre;line-height:1;transform-origin:0 0;transform:scaleX(1.0867) translateY(-50%)'>0,05250</div>
<div class='a' style='left:7px;top:1250.3px;width:391px;height:28px;background:#354a62'></div>
<div class='a' style='left:7px;top:1250.3px;width:31.9px;height:28px;background:#d4722d'></div>
<div class='a' style='left:12px;top:1264.8px;font-size:28px;color:#f4f4f4;white-space:pre;line-height:1;transform-origin:0 0;transform:scaleX(1.05) translateY(-50%)'>3 414</div>
<div class='a' style='left:271px;top:1264.8px;font-size:28px;color:#f4f4f4;white-space:pre;line-height:1;transform-origin:0 0;transform:scaleX(1.0867) translateY(-50%)'>0,05249</div>
<div class='a' style='left:7px;top:1278.3px;width:391px;height:28px;background:#354a62'></div>
<div class='a' style='left:7px;top:1278.3px;width:52.3px;height:28px;background:#d4722d'></div>
<div class='a' style='left:12px;top:1292.8px;font-size:28px;color:#f4f4f4;white-space:pre;line-height:1;transform-origin:0 0;transform:scaleX(1.05) translateY(-50%)'>5 598</div>
<div class='a' style='left:271px;top:1292.8px;font-size:28px;color:#f4f4f4;white-space:pre;line-height:1;transform-origin:0 0;transform:scaleX(1.0867) translateY(-50%)'>0,05248</div>
<div class='a' style='left:7px;top:1306.3px;width:391px;height:28px;background:#354a62'></div>
<div class='a' style='left:7px;top:1306.3px;width:112.0px;height:28px;background:#d4722d'></div>
<div class='a' style='left:12px;top:1320.8px;font-size:28px;color:#f4f4f4;white-space:pre;line-height:1;transform-origin:0 0;transform:scaleX(1.05) translateY(-50%)'>11 987</div>
<div class='a' style='left:271px;top:1320.8px;font-size:28px;color:#f4f4f4;white-space:pre;line-height:1;transform-origin:0 0;transform:scaleX(1.0867) translateY(-50%)'>0,05247</div>
<div class='a' style='left:7px;top:1334.3px;width:391px;height:28px;background:#354a62'></div>
<div class='a' style='left:7px;top:1334.3px;width:34.2px;height:28px;background:#d4722d'></div>
<div class='a' style='left:12px;top:1348.8px;font-size:28px;color:#f4f4f4;white-space:pre;line-height:1;transform-origin:0 0;transform:scaleX(1.05) translateY(-50%)'>3 655</div>
<div class='a' style='left:271px;top:1348.8px;font-size:28px;color:#f4f4f4;white-space:pre;line-height:1;transform-origin:0 0;transform:scaleX(1.0867) translateY(-50%)'>0,05246</div>
<div class='a' style='left:7px;top:1362.3px;width:391px;height:28px;background:#354a62'></div>
<div class='a' style='left:7px;top:1362.3px;width:33.4px;height:28px;background:#d4722d'></div>
<div class='a' style='left:12px;top:1376.8px;font-size:28px;color:#f4f4f4;white-space:pre;line-height:1;transform-origin:0 0;transform:scaleX(1.05) translateY(-50%)'>3 571</div>
<div class='a' style='left:271px;top:1376.8px;font-size:28px;color:#f4f4f4;white-space:pre;line-height:1;transform-origin:0 0;transform:scaleX(1.0867) translateY(-50%)'>0,05245</div>
</div>
<div class='a' style='left:1702px;top:163px;width:454px;height:32px;background:#5b1f21;'></div>
<div class='a' style='left:1206px;top:195px;width:950px;height:32px;background:#354a62;'></div>
<div class='r' style='left:2149px;top:180px;font-size:28px;color:#f4f4f4;letter-spacing:4.6px;word-spacing:-6px'>31 217 431</div>
<div class='r' style='left:2149px;top:212px;font-size:28px;color:#f4f4f4;letter-spacing:4.6px;word-spacing:-6px'>65 241 397</div>
<div class='a' style='left:2156px;top:163px;width:2px;height:1383px;background:#6d6d70;'></div>
<div class='a' style='left:2406px;top:163px;width:2px;height:1383px;background:#85797a;'></div>
<div class='a' style='left:2548px;top:163px;width:2px;height:1341px;background:#6d6d70;'></div>
<svg class='a' style='left:2118px;top:234px;' width='28' height='28' viewBox='0 0 28 28'><path d='M22.84 12.31 L26.41 12.53 L26.41 15.47 L22.84 15.69 L21.44 19.06 L23.82 21.74 L21.74 23.82 L19.06 21.44 L15.69 22.84 L15.47 26.41 L12.53 26.41 L12.31 22.84 L8.94 21.44 L6.26 23.82 L4.18 21.74 L6.56 19.06 L5.16 15.69 L1.59 15.47 L1.59 12.53 L5.16 12.31 L6.56 8.94 L4.18 6.26 L6.26 4.18 L8.94 6.56 L12.31 5.16 L12.53 1.59 L15.47 1.59 L15.69 5.16 L19.06 6.56 L21.74 4.18 L23.82 6.26 L21.44 8.94 Z' fill='#3e8a50'/><circle cx='14' cy='14' r='9.6' fill='#3e8a50'/><circle cx='14' cy='14' r='4.2' fill='#19191b'/></svg>
<div class='a' style='left:1218px;top:281px;font-size:28px;color:#f4f4f4;white-space:pre;line-height:1;transform-origin:0 0;transform:scaleX(1.1493) translateY(-50%);'>0 мс.</div>
<svg class='a' style='left:1300px;top:265px;' width='22' height='34' viewBox='0 0 22 34'><path d='M4.7 9.5 L11 2.9 L17.2 9.5 Z' fill='#f4f4f4'/><rect x='8.6' y='8' width='4.7' height='22' fill='#f4f4f4'/></svg>
<div class='a' style='left:1218px;top:315px;font-size:28px;color:#f4f4f4;white-space:pre;line-height:1;transform-origin:0 0;transform:scaleX(1.1828) translateY(-50%);'>272 мс.</div>
<svg class='a' style='left:1340px;top:299px;' width='22' height='32' viewBox='0 0 22 32'><rect x='8' y='2.2' width='5.5' height='20' fill='#f4f4f4'/><path d='M4.3 21 L17 21 L10.7 29 Z' fill='#f4f4f4'/></svg>
<div class='a' style='left:2577px;top:183px;font-size:28px;color:#f4f4f4;white-space:pre;line-height:1;transform-origin:0 0;transform:scaleX(1.3383) translateY(-50%);'>'0</div>
<div class='a' style='left:2574px;top:1526px;font-size:28px;color:#f4f4f4;white-space:pre;line-height:1;transform-origin:0 0;transform:scaleX(1.3383) translateY(-50%);'>'0</div>
<div class='a' style='left:1206px;top:1546px;width:1424px;height:2px;background:#8a8a8c;'></div>
<div class='a' style='left:1206px;top:1548px;width:1428px;height:37px;background:#19191b;'></div>
<div class='a' style='left:1348px;top:1546px;width:2px;height:39px;background:#8a8a8c;'></div>
<div class='a' style='left:1988px;top:1546px;width:2px;height:39px;background:#8a8a8c;'></div>
<div class='a' style='left:1228px;top:1565px;font-size:28px;color:#f4f4f4;white-space:pre;line-height:1;transform-origin:0 0;transform:scaleX(1.0276) translateY(-50%);-webkit-text-stroke:0.7px #f4f4f4'>ENTRY</div>
<div class='a' style='left:1631px;top:1565px;font-size:28px;color:#f4f4f4;white-space:pre;line-height:1;transform-origin:0 0;transform:scaleX(1.1147) translateY(-50%);-webkit-text-stroke:0.7px #f4f4f4'>FLAT</div>
<div class='a' style='left:2280px;top:1565px;font-size:28px;color:#f4f4f4;white-space:pre;line-height:1;transform-origin:0 0;transform:scaleX(1.0838) translateY(-50%);-webkit-text-stroke:0.7px #f4f4f4'>PnL</div>
<div class='a' style='left:1910px;top:1396px;width:214px;height:5px;background:#e64fe6;'></div>
<svg class='a' style='left:2120px;top:1385px;' width='28' height='27' viewBox='0 0 28 27'><path d='M1 1 L26.5 13.5 L1 26 Z' fill='#e64fe6'/></svg>
<svg class='a' style='left:1400px;top:600px;' width='800' height='400' viewBox='0 0 800 400'><circle cx='86' cy='295' r='42' fill='rgba(172,38,38,0.45)' stroke='#a8302e' stroke-width='2.2'/><text x='86' y='305' text-anchor='middle' font-size='28' fill='#f4f4f4' font-family='Liberation Sans' textLength='62.4'>1,5K</text><circle cx='126' cy='295' r='39' fill='rgba(172,38,38,0.45)' stroke='#a8302e' stroke-width='2.2'/><text x='123' y='305' text-anchor='middle' font-size='28' fill='#f4f4f4' font-family='Liberation Sans' textLength='46.8'>267</text><circle cx='161' cy='323' r='27' fill='rgba(172,38,38,0.45)' stroke='#a8302e' stroke-width='2.2'/><text x='161' y='333' text-anchor='middle' font-size='28' fill='#f4f4f4' font-family='Liberation Sans' textLength='31.2'>21</text><rect x='150' y='250' width='72' height='61' fill='rgba(87,134,187,0.45)' stroke='#5786bb' stroke-width='2.2'/><text x='186' y='290.5' text-anchor='middle' font-size='28' fill='#f4f4f4' font-family='Liberation Sans' textLength='46.8'>369</text><circle cx='222' cy='266' r='38' fill='rgba(87,134,187,0.45)' stroke='#5786bb' stroke-width='2.2'/><text x='221' y='276' text-anchor='middle' font-size='28' fill='#f4f4f4' font-family='Liberation Sans' textLength='46.8'>556</text><circle cx='258' cy='239' r='38' fill='rgba(87,134,187,0.45)' stroke='#5786bb' stroke-width='2.2'/><text x='257' y='249' text-anchor='middle' font-size='28' fill='#f4f4f4' font-family='Liberation Sans' textLength='46.8'>416</text><circle cx='293' cy='211' r='27' fill='rgba(87,134,187,0.45)' stroke='#5786bb' stroke-width='2.2'/><text x='293' y='221' text-anchor='middle' font-size='28' fill='#f4f4f4' font-family='Liberation Sans' textLength='31.2'>47</text><circle cx='320' cy='211' r='38' fill='rgba(87,134,187,0.45)' stroke='#5786bb' stroke-width='2.2'/><text x='320' y='221' text-anchor='middle' font-size='28' fill='#f4f4f4' font-family='Liberation Sans' textLength='46.8'>712</text><circle cx='356' cy='183' r='38' fill='rgba(87,134,187,0.45)' stroke='#5786bb' stroke-width='2.2'/><text x='354' y='193' text-anchor='middle' font-size='28' fill='#f4f4f4' font-family='Liberation Sans' textLength='46.8'>569</text><circle cx='391' cy='155' r='38' fill='rgba(87,134,187,0.45)' stroke='#5786bb' stroke-width='2.2'/><text x='391' y='165' text-anchor='middle' font-size='28' fill='#f4f4f4' font-family='Liberation Sans' textLength='46.8'>122</text><circle cx='427' cy='127' r='38' fill='rgba(87,134,187,0.45)' stroke='#5786bb' stroke-width='2.2'/><text x='425' y='137' text-anchor='middle' font-size='28' fill='#f4f4f4' font-family='Liberation Sans' textLength='46.8'>228</text><circle cx='463' cy='99' r='38' fill='rgba(87,134,187,0.45)' stroke='#5786bb' stroke-width='2.2'/><text x='461' y='109' text-anchor='middle' font-size='28' fill='#f4f4f4' font-family='Liberation Sans' textLength='46.8'>371</text><rect x='462' y='27' width='72' height='60' fill='rgba(87,134,187,0.45)' stroke='#5786bb' stroke-width='2.2'/><text x='498' y='67.0' text-anchor='middle' font-size='28' fill='#f4f4f4' font-family='Liberation Sans' textLength='46.8'>359</text><circle cx='535' cy='71' r='27' fill='rgba(172,38,38,0.45)' stroke='#a8302e' stroke-width='2.2'/><text x='534' y='81' text-anchor='middle' font-size='28' fill='#f4f4f4' font-family='Liberation Sans' textLength='31.2'>53</text><circle cx='560' cy='99' r='27' fill='rgba(172,38,38,0.45)' stroke='#a8302e' stroke-width='2.2'/><text x='561' y='109' text-anchor='middle' font-size='28' fill='#f4f4f4' font-family='Liberation Sans' textLength='31.2'>10</text><rect x='559' y='110' width='51' height='61' fill='rgba(172,38,38,0.45)' stroke='#a8302e' stroke-width='2.2'/><text x='586' y='150.5' text-anchor='middle' font-size='28' fill='#f4f4f4' font-family='Liberation Sans' textLength='31.2'>72</text><circle cx='610' cy='155' r='27' fill='rgba(172,38,38,0.45)' stroke='#a8302e' stroke-width='2.2'/><text x='611' y='165' text-anchor='middle' font-size='28' fill='#f4f4f4' font-family='Liberation Sans' textLength='31.2'>10</text><circle cx='635' cy='183' r='27' fill='rgba(172,38,38,0.45)' stroke='#a8302e' stroke-width='2.2'/><text x='634' y='193' text-anchor='middle' font-size='28' fill='#f4f4f4' font-family='Liberation Sans' textLength='31.2'>32</text><circle cx='660' cy='211' r='27' fill='rgba(172,38,38,0.45)' stroke='#a8302e' stroke-width='2.2'/><text x='661' y='221' text-anchor='middle' font-size='28' fill='#f4f4f4' font-family='Liberation Sans' textLength='31.2'>10</text><circle cx='685' cy='239' r='27' fill='rgba(172,38,38,0.45)' stroke='#a8302e' stroke-width='2.2'/><text x='685' y='249' text-anchor='middle' font-size='28' fill='#f4f4f4' font-family='Liberation Sans' textLength='31.2'>47</text><rect x='673' y='250' width='73' height='61' fill='rgba(172,38,38,0.45)' stroke='#a8302e' stroke-width='2.2'/><text x='710' y='290.5' text-anchor='middle' font-size='28' fill='#f4f4f4' font-family='Liberation Sans' textLength='46.8'>563</text><polyline points='86,295 126,295 161,323 186,296 222,266 258,239 293,211 320,211 356,183 391,155 427,127 463,99 498,71 535,71 560,99 585,140 610,155 635,183 660,211 685,239 710,267' fill='none' stroke='rgba(210,210,215,0.55)' stroke-width='2.2'/></svg>
<div class='a' style='left:128px;top:1441px;width:16px;height:28px;background:#1f3325;'></div>
<div class='a' style='left:128px;top:1469px;width:14px;height:28px;background:#2a1a1a;'></div>
<div class='a' style='left:128px;top:1497px;width:48px;height:28px;background:#264632;'></div>
<div class='a' style='left:128px;top:1525px;width:80px;height:28px;background:#4a8a5c;'></div>
<div class='a' style='left:114px;top:1553px;width:12px;height:4px;background:#5786bb;'></div>
<div class='a' style='left:128px;top:1553px;width:38px;height:4px;background:#264632;'></div>
<div class='a' style='left:234px;top:1441px;width:12px;height:116px;background:#5a82b3;'></div>
<div class='a' style='left:248px;top:1441px;width:100px;height:24px;background:#22382a;border:2px solid #c0c0c0'></div>
<div class='a' style='left:248px;top:1469px;width:20px;height:28px;background:#264632;'></div>
<div class='a' style='left:248px;top:1497px;width:40px;height:28px;background:#223d2b;'></div>
<div class='a' style='left:248px;top:1525px;width:10px;height:28px;background:#1f3325;'></div>
<div class='a' style='left:248px;top:1553px;width:42px;height:4px;background:#3d7a4d;'></div>
<div class='a' style='left:133px;top:1456px;font-size:28px;color:#f4f4f4;white-space:pre;line-height:1;transform-origin:0 0;transform:scaleX(0.9275) translateY(-50%);'>1 449</div>
<div class='a' style='left:133px;top:1484px;font-size:28px;color:#f4f4f4;white-space:pre;line-height:1;transform-origin:0 0;transform:scaleX(0.9275) translateY(-50%);'>1 339</div>
<div class='a' style='left:131px;top:1512px;font-size:28px;color:#f4f4f4;white-space:pre;line-height:1;transform-origin:0 0;transform:scaleX(0.9561) translateY(-50%);'>4 253</div>
<div class='a' style='left:131px;top:1540px;font-size:28px;color:#f4f4f4;white-space:pre;line-height:1;transform-origin:0 0;transform:scaleX(0.9561) translateY(-50%);'>7 098</div>
<div class='a' style='left:250px;top:1456px;font-size:28px;color:#f4f4f4;white-space:pre;line-height:1;transform-origin:0 0;transform:scaleX(0.9703) translateY(-50%);'>4 016</div>
<div class='a' style='left:250px;top:1484px;font-size:28px;color:#f4f4f4;white-space:pre;line-height:1;transform-origin:0 0;transform:scaleX(0.9631) translateY(-50%);'>831</div>
<div class='a' style='left:253px;top:1512px;font-size:28px;color:#f4f4f4;white-space:pre;line-height:1;transform-origin:0 0;transform:scaleX(0.9418) translateY(-50%);'>1 548</div>
<div class='a' style='left:250px;top:1540px;font-size:28px;color:#f4f4f4;white-space:pre;line-height:1;transform-origin:0 0;transform:scaleX(0.9631) translateY(-50%);'>427</div>
<div class='a' style='left:55px;top:1570px;font-size:28px;color:#f4f4f4;white-space:pre;line-height:1;transform-origin:0 0;transform:scaleX(1.0273) translateY(-50%);'>03</div>
<div class='a' style='left:141px;top:1570px;font-size:28px;color:#f4f4f4;white-space:pre;line-height:1;transform-origin:0 0;transform:scaleX(0.9418) translateY(-50%);'>12:04</div>
<div class='a' style='left:261px;top:1570px;font-size:28px;color:#f4f4f4;white-space:pre;line-height:1;transform-origin:0 0;transform:scaleX(0.9275) translateY(-50%);'>12:05</div>
<div class='a' style='left:381px;top:1570px;font-size:28px;color:#f4f4f4;white-space:pre;line-height:1;transform-origin:0 0;transform:scaleX(0.9275) translateY(-50%);'>12:06</div>
<div class='a' style='left:501px;top:1570px;font-size:28px;color:#f4f4f4;white-space:pre;line-height:1;transform-origin:0 0;transform:scaleX(0.9275) translateY(-50%);'>12:07</div>
<div class='a' style='left:621px;top:1570px;font-size:28px;color:#f4f4f4;white-space:pre;line-height:1;transform-origin:0 0;transform:scaleX(0.9275) translateY(-50%);'>12:08</div>
<div class='a' style='left:741px;top:1570px;font-size:28px;color:#f4f4f4;white-space:pre;line-height:1;transform-origin:0 0;transform:scaleX(0.9275) translateY(-50%);'>12:09</div>
<div class='a' style='left:861px;top:1570px;font-size:28px;color:#f4f4f4;white-space:pre;line-height:1;transform-origin:0 0;transform:scaleX(0.9275) translateY(-50%);'>12:10</div>
<div class='a' style='left:981px;top:1570px;font-size:28px;color:#f4f4f4;white-space:pre;line-height:1;transform-origin:0 0;transform:scaleX(0.9559) translateY(-50%);'>12:11</div>
<div class='a' style='left:1101px;top:1570px;font-size:28px;color:#f4f4f4;white-space:pre;line-height:1;transform-origin:0 0;transform:scaleX(0.9275) translateY(-50%);'>12:12</div>
<div class='a' style='left:112px;top:301px;width:1100px;height:1140px;background:#38393c;'></div>
<div class='a' style='left:114px;top:303px;width:1096px;height:1136px;background:#2a2b2e;'></div>
<div class='a' style='left:114px;top:303px;width:1096px;height:58px;background:#1f1f21;'></div>
<div class='a' style='left:129px;top:331px;font-size:28px;color:#c8c8c8;white-space:pre;line-height:1;transform-origin:0 0;transform:scaleX(1.0364) translateY(-50%);'>Параметры торговли</div>
<div class='a' style='left:980px;top:331px;width:21px;height:2px;background:#c8c8c8;'></div>
<div class='a' style='left:1068px;top:321px;width:17px;height:17px;border:2px solid #c8c8c8'></div>
<svg class='a' style='left:1155px;top:320px;' width='23' height='23' viewBox='0 0 23 23'><path d='M1 1 L22 22 M22 1 L1 22' stroke='#c8c8c8' stroke-width='2.2'/></svg>
<div class='a' style='left:134px;top:403px;font-size:28px;color:#e8e8e8;white-space:pre;line-height:1;transform-origin:0 0;transform:scaleX(1.0220) translateY(-50%);'>Шаблон</div>
<div class='a' style='left:260px;top:380px;width:719px;height:40px;background:#1b1b1d;border:2px solid #3a3b3e'></div>
<svg class='a' style='left:956px;top:397px;' width='20' height='12' viewBox='0 0 20 12'><path d='M2 2 L10 10 L18 2' stroke='#b8b8b8' stroke-width='2.4' fill='none'/></svg>
<div class='a' style='left:1004px;top:379px;width:52px;height:42px;background:#2c2d31;border:2px solid #37383c'></div>
<div class='a' style='left:1070px;top:379px;width:52px;height:42px;background:#2c2d31;border:2px solid #37383c'></div>
<div class='a' style='left:1136px;top:379px;width:52px;height:42px;background:#2c2d31;border:2px solid #37383c'></div>
<svg class='a' style='left:1014px;top:384px;' width='36' height='36' viewBox='0 0 36 36'><path d='M5 18 L14 28 L31 4' stroke='#6aae8a' stroke-width='6' fill='none' stroke-linejoin='round' stroke-linecap='round'/></svg>
<svg class='a' style='left:1080px;top:385px;' width='36' height='34' viewBox='0 0 36 34'><path d='M5 5 L31 29 M31 5 L5 29' stroke='#c65a3e' stroke-width='6.5' stroke-linecap='round'/></svg>
<svg class='a' style='left:1146px;top:384px;' width='36' height='36' viewBox='0 0 36 36'><path d='M12.4 2 H23.8 V10.5 H27.4 L18 21 L8.6 10.5 H12.4 Z' fill='#5a86bd'/><path d='M4 22 H12 L18 27 L24 22 H32 Q34 22 34 24 V32 Q34 34 32 34 H4 Q2 34 2 32 V24 Q2 22 4 22 Z' fill='#5a86bd'/><circle cx='6.7' cy='28' r='1.8' fill='#2c2d31'/></svg>
<div class='a' style='left:144px;top:446px;width:163px;height:47px;background:#2a2b2e;border:2px solid #3a3b3e;border-bottom:none'></div>
<div class='a' style='left:310px;top:450px;width:130px;height:41px;background:#2a2b2e;border:2px solid #3a3b3e;border-bottom:none'></div>
<div class='a' style='left:444px;top:450px;width:146px;height:41px;background:#2a2b2e;border:2px solid #3a3b3e;border-bottom:none'></div>
<div class='a' style='left:161px;top:471px;font-size:28px;color:#e8e8e8;white-space:pre;line-height:1;transform-origin:0 0;transform:scaleX(1.0086) translateY(-50%);'>Основные</div>
<div class='a' style='left:321px;top:473px;font-size:28px;color:#e8e8e8;white-space:pre;line-height:1;transform-origin:0 0;transform:scaleX(1.0294) translateY(-50%);'>Кластер</div>
<div class='a' style='left:457px;top:473px;font-size:28px;color:#e8e8e8;white-space:pre;line-height:1;transform-origin:0 0;transform:scaleX(1.0429) translateY(-50%);'>Торговля</div>
<div class='a' style='left:144px;top:491px;width:1035px;height:857px;background:#2a2b2e;border:2px solid #3a3b3e'></div>
<div class='a' style='left:146px;top:491px;width:159px;height:2px;background:#2a2b2e;'></div>
<svg class='a' style='left:154px;top:511px;' width='18' height='12' viewBox='0 0 18 12'><path d='M2 2 L9 9 L16 2' stroke='#c8c8c8' stroke-width='2.4' fill='none'/></svg>
<div class='a' style='left:188px;top:519px;font-size:28px;color:#e8e8e8;white-space:pre;line-height:1;transform-origin:0 0;transform:scaleX(1.0348) translateY(-50%);-webkit-text-stroke:0.6px #e8e8e8'>График</div>
<div class='a' style='left:178px;top:543px;width:668px;height:41px;background:#3a7bcc;'></div>
<div class='a' style='left:849px;top:543px;width:299px;height:41px;background:#1e1e1f;'></div>
<div class='a' style='left:186px;top:565.5px;font-size:28px;color:#ffffff;white-space:pre;line-height:1;transform-origin:0 0;transform:scaleX(0.9995) translateY(-50%);'>Валюта фильтров</div>
<div class='a' style='left:856px;top:565.5px;font-size:28px;color:#e8e8e8;white-space:pre;line-height:1;transform-origin:0 0;transform:scaleX(1.0030) translateY(-50%);'>Валюта котировани</div>
<div class='a' style='left:178px;top:587px;width:668px;height:41px;background:#1e1e1f;'></div>
<div class='a' style='left:849px;top:587px;width:299px;height:41px;background:#1e1e1f;'></div>
<div class='a' style='left:186px;top:609.5px;font-size:28px;color:#e8e8e8;white-space:pre;line-height:1;transform-origin:0 0;transform:scaleX(1.0065) translateY(-50%);'>Удалять сделки объемом менее</div>
<div class='a' style='left:856px;top:609.5px;font-size:28px;color:#e8e8e8;white-space:pre;line-height:1;transform-origin:0 0;transform:scaleX(1.2842) translateY(-50%);'>0</div>
<div class='a' style='left:178px;top:631px;width:668px;height:41px;background:#1e1e1f;'></div>
<div class='a' style='left:849px;top:631px;width:299px;height:41px;background:#1e1e1f;'></div>
<div class='a' style='left:186px;top:653.5px;font-size:28px;color:#e8e8e8;white-space:pre;line-height:1;transform-origin:0 0;transform:scaleX(1.0139) translateY(-50%);'>Скрывать сделки объёмом менее</div>
<div class='a' style='left:856px;top:653.5px;font-size:28px;color:#e8e8e8;white-space:pre;line-height:1;transform-origin:0 0;transform:scaleX(1.2842) translateY(-50%);'>0</div>
<div class='a' style='left:178px;top:675px;width:668px;height:41px;background:#1e1e1f;'></div>
<div class='a' style='left:849px;top:675px;width:299px;height:41px;background:#1e1e1f;'></div>
<div class='a' style='left:186px;top:697.5px;font-size:28px;color:#e8e8e8;white-space:pre;line-height:1;transform-origin:0 0;transform:scaleX(1.0098) translateY(-50%);'>Скрывать значение объёма менее</div>
<div class='a' style='left:856px;top:697.5px;font-size:28px;color:#e8e8e8;white-space:pre;line-height:1;transform-origin:0 0;transform:scaleX(1.2200) translateY(-50%);'>5</div>
<div class='a' style='left:178px;top:719px;width:668px;height:41px;background:#1e1e1f;'></div>
<div class='a' style='left:849px;top:719px;width:299px;height:41px;background:#1e1e1f;'></div>
<div class='a' style='left:186px;top:741.5px;font-size:28px;color:#e8e8e8;white-space:pre;line-height:1;transform-origin:0 0;transform:scaleX(1.0401) translateY(-50%);'>Минимизировать значения</div>
<div class='a' style='left:858px;top:722.5px;width:31px;height:31px;border:2px solid #48494c;background:#1e1e1f'></div>
<svg class='a' style='left:864px;top:730.5px;' width='22' height='18' viewBox='0 0 22 18'><path d='M2 9 L8 15 L20 3' stroke='#cfcfcf' stroke-width='4' fill='none'/></svg>
<div class='a' style='left:178px;top:763px;width:668px;height:41px;background:#1e1e1f;'></div>
<div class='a' style='left:849px;top:763px;width:299px;height:41px;background:#1e1e1f;'></div>
<div class='a' style='left:186px;top:785.5px;font-size:28px;color:#e8e8e8;white-space:pre;line-height:1;transform-origin:0 0;transform:scaleX(1.0220) translateY(-50%);'>Округлять значения</div>
<div class='a' style='left:856px;top:785.5px;font-size:28px;color:#e8e8e8;white-space:pre;line-height:1;transform-origin:0 0;transform:scaleX(1.2842) translateY(-50%);'>0</div>
<div class='a' style='left:178px;top:807px;width:668px;height:41px;background:#1e1e1f;'></div>
<div class='a' style='left:849px;top:807px;width:299px;height:41px;background:#1e1e1f;'></div>
<div class='a' style='left:186px;top:829.5px;font-size:28px;color:#e8e8e8;white-space:pre;line-height:1;transform-origin:0 0;transform:scaleX(1.0529) translateY(-50%);'>Компактный режим</div>
<div class='a' style='left:858px;top:810.5px;width:31px;height:31px;border:2px solid #48494c;background:#1e1e1f'></div>
<svg class='a' style='left:864px;top:818.5px;' width='22' height='18' viewBox='0 0 22 18'><path d='M2 9 L8 15 L20 3' stroke='#cfcfcf' stroke-width='4' fill='none'/></svg>
<div class='a' style='left:178px;top:851px;width:668px;height:41px;background:#1e1e1f;'></div>
<div class='a' style='left:849px;top:851px;width:299px;height:41px;background:#1e1e1f;'></div>
<div class='a' style='left:186px;top:873.5px;font-size:28px;color:#e8e8e8;white-space:pre;line-height:1;transform-origin:0 0;transform:scaleX(1.0379) translateY(-50%);'>Агрегация сделок</div>
<div class='a' style='left:858px;top:854.5px;width:31px;height:31px;border:2px solid #48494c;background:#1e1e1f'></div>
<svg class='a' style='left:864px;top:862.5px;' width='22' height='18' viewBox='0 0 22 18'><path d='M2 9 L8 15 L20 3' stroke='#cfcfcf' stroke-width='4' fill='none'/></svg>
<div class='a' style='left:178px;top:895px;width:668px;height:41px;background:#1e1e1f;'></div>
<div class='a' style='left:849px;top:895px;width:299px;height:41px;background:#1e1e1f;'></div>
<div class='a' style='left:186px;top:917.5px;font-size:28px;color:#e8e8e8;white-space:pre;line-height:1;transform-origin:0 0;transform:scaleX(1.0194) translateY(-50%);'>Отображать линию сделок</div>
<div class='a' style='left:858px;top:898.5px;width:31px;height:31px;border:2px solid #48494c;background:#1e1e1f'></div>
<svg class='a' style='left:864px;top:906.5px;' width='22' height='18' viewBox='0 0 22 18'><path d='M2 9 L8 15 L20 3' stroke='#cfcfcf' stroke-width='4' fill='none'/></svg>
<div class='a' style='left:178px;top:939px;width:668px;height:41px;background:#1e1e1f;'></div>
<div class='a' style='left:849px;top:939px;width:299px;height:41px;background:#1e1e1f;'></div>
<div class='a' style='left:186px;top:961.5px;font-size:28px;color:#e8e8e8;white-space:pre;line-height:1;transform-origin:0 0;transform:scaleX(1.0077) translateY(-50%);'>Толщина линии сделок</div>
<div class='a' style='left:856px;top:961.5px;font-size:28px;color:#e8e8e8;white-space:pre;line-height:1;transform-origin:0 0;transform:scaleX(0.9631) translateY(-50%);'>1</div>
<div class='a' style='left:178px;top:983px;width:668px;height:41px;background:#1e1e1f;'></div>
<div class='a' style='left:849px;top:983px;width:299px;height:41px;background:#1e1e1f;'></div>
<div class='a' style='left:186px;top:1005.5px;font-size:28px;color:#e8e8e8;white-space:pre;line-height:1;transform-origin:0 0;transform:scaleX(1.0247) translateY(-50%);'>Фильтры объема</div>
<div class='a' style='left:856px;top:1005.5px;font-size:28px;color:#e8e8e8;white-space:pre;line-height:1;transform-origin:0 0;transform:scaleX(0.9959) translateY(-50%);'>Нет фильтров</div>
<svg class='a' style='left:1120px;top:558px;' width='20' height='12' viewBox='0 0 20 12'><path d='M2 2 L10 10 L18 2' stroke='#c8c8c8' stroke-width='2.4' fill='none'/></svg>
<svg class='a' style='left:1122px;top:994px;' width='18' height='18' viewBox='0 0 18 18'><path d='M9 1 V17 M1 9 H17' stroke='#8a8a8c' stroke-width='2'/></svg>
<svg class='a' style='left:154px;top:1046px;' width='18' height='12' viewBox='0 0 18 12'><path d='M2 2 L9 9 L16 2' stroke='#c8c8c8' stroke-width='2.4' fill='none'/></svg>
<div class='a' style='left:188px;top:1052px;font-size:28px;color:#e8e8e8;white-space:pre;line-height:1;transform-origin:0 0;transform:scaleX(1.0410) translateY(-50%);-webkit-text-stroke:0.6px #e8e8e8'>Стакан</div>
<div class='a' style='left:178px;top:1077px;width:668px;height:42px;background:#1e1e1f;'></div>
<div class='a' style='left:849px;top:1077px;width:299px;height:42px;background:#1e1e1f;'></div>
<div class='a' style='left:186px;top:1100.0px;font-size:28px;color:#e8e8e8;white-space:pre;line-height:1;transform-origin:0 0;transform:scaleX(0.9995) translateY(-50%);'>Валюта фильтров</div>
<div class='a' style='left:856px;top:1100.0px;font-size:28px;color:#e8e8e8;white-space:pre;line-height:1;transform-origin:0 0;transform:scaleX(1.0106) translateY(-50%);'>Базовая валюта</div>
<div class='a' style='left:178px;top:1121px;width:668px;height:42px;background:#1e1e1f;'></div>
<div class='a' style='left:849px;top:1121px;width:299px;height:42px;background:#1e1e1f;'></div>
<div class='a' style='left:186px;top:1144.0px;font-size:28px;color:#e8e8e8;white-space:pre;line-height:1;transform-origin:0 0;transform:scaleX(1.0060) translateY(-50%);'>Объём полной шкалы</div>
<div class='a' style='left:856px;top:1144.0px;font-size:28px;color:#e8e8e8;white-space:pre;line-height:1;transform-origin:0 0;transform:scaleX(1.0768) translateY(-50%);'>500 000</div>
<div class='a' style='left:178px;top:1165px;width:668px;height:42px;background:#1e1e1f;'></div>
<div class='a' style='left:849px;top:1165px;width:299px;height:42px;background:#1e1e1f;'></div>
<div class='a' style='left:186px;top:1188.0px;font-size:28px;color:#e8e8e8;white-space:pre;line-height:1;transform-origin:0 0;transform:scaleX(1.0401) translateY(-50%);'>Минимизировать значения</div>
<div class='a' style='left:858px;top:1169.0px;width:31px;height:31px;border:2px solid #48494c;background:#1e1e1f'></div>
<div class='a' style='left:178px;top:1209px;width:668px;height:42px;background:#1e1e1f;'></div>
<div class='a' style='left:849px;top:1209px;width:299px;height:42px;background:#1e1e1f;'></div>
<div class='a' style='left:186px;top:1232.0px;font-size:28px;color:#e8e8e8;white-space:pre;line-height:1;transform-origin:0 0;transform:scaleX(1.0220) translateY(-50%);'>Округлять значения</div>
<div class='a' style='left:856px;top:1232.0px;font-size:28px;color:#e8e8e8;white-space:pre;line-height:1;transform-origin:0 0;transform:scaleX(1.2842) translateY(-50%);'>0</div>
<div class='a' style='left:178px;top:1253px;width:668px;height:42px;background:#1e1e1f;'></div>
<div class='a' style='left:849px;top:1253px;width:299px;height:42px;background:#1e1e1f;'></div>
<div class='a' style='left:186px;top:1276.0px;font-size:28px;color:#e8e8e8;white-space:pre;line-height:1;transform-origin:0 0;transform:scaleX(1.0438) translateY(-50%);'>Шаг горизонтальной сетки</div>
<div class='a' style='left:856px;top:1276.0px;font-size:28px;color:#e8e8e8;white-space:pre;line-height:1;transform-origin:0 0;transform:scaleX(1.0915) translateY(-50%);'>10</div>
<div class='a' style='left:178px;top:1297px;width:668px;height:42px;background:#1e1e1f;'></div>
<div class='a' style='left:849px;top:1297px;width:299px;height:42px;background:#1e1e1f;'></div>
<div class='a' style='left:186px;top:1320.0px;font-size:28px;color:#e8e8e8;white-space:pre;line-height:1;transform-origin:0 0;transform:scaleX(1.0472) translateY(-50%);'>Шаг промежуточной сетки</div>
<div class='a' style='left:856px;top:1320.0px;font-size:28px;color:#e8e8e8;white-space:pre;line-height:1;transform-origin:0 0;transform:scaleX(1.0915) translateY(-50%);'>50</div>
<div class='a' style='left:178px;top:1341px;width:668px;height:9px;background:#1e1e1f;'></div>
<div class='a' style='left:849px;top:1341px;width:299px;height:9px;background:#1e1e1f;'></div>
<svg class='a' style='left:1120px;top:1094px;' width='20' height='12' viewBox='0 0 20 12'><path d='M2 2 L10 10 L18 2' stroke='#c8c8c8' stroke-width='2.4' fill='none'/></svg>
<svg class='a' style='left:1154px;top:502px;' width='22' height='14' viewBox='0 0 22 14'><path d='M2 12 L11 3 L20 12' stroke='#b0b0b0' stroke-width='2.4' fill='none'/></svg>
<div class='a' style='left:1154px;top:526px;width:22px;height:185px;background:#3b3c3f;'></div>
<svg class='a' style='left:1154px;top:1326px;' width='22' height='14' viewBox='0 0 22 14'><path d='M2 2 L11 11 L20 2' stroke='#b0b0b0' stroke-width='2.4' fill='none'/></svg>
<div class='a' style='left:172px;top:1126px;width:287px;height:4px;background:#e64fe6;'></div>
<div class='a' style='left:1180px;top:1097px;width:452px;height:5px;background:#e64fe6;'></div>
<svg class='a' style='left:1156px;top:1086px;' width='28' height='27' viewBox='0 0 28 27'><path d='M1 13.5 L27 1 L27 26 Z' fill='#e64fe6'/></svg>
<div class='a' style='left:1040px;top:1373px;width:145px;height:41px;border:2px solid #2a64b2;background:#2d2e32'></div>
<div class='a' style='left:1059px;top:1397px;font-size:28px;color:#e8e8e8;white-space:pre;line-height:1;transform-origin:0 0;transform:scaleX(1.0385) translateY(-50%);'>Закрыть</div>
<div class='a' style='left:2646px;top:173px;width:188px;height:40px;background:#345f96;border:3px solid #2f3d50'></div>
<div class='a' style='left:2852px;top:173px;width:188px;height:40px;background:#782536;border:3px solid #40282e'></div>
<div class='a' style='left:2646px;top:229px;width:188px;height:40px;background:#345f96;border:3px solid #2f3d50'></div>
<div class='a' style='left:2852px;top:229px;width:188px;height:40px;background:#782536;border:3px solid #40282e'></div>
<div class='a' style='left:2686px;top:197px;font-size:28px;color:#f0f0f0;white-space:pre;line-height:1;transform-origin:0 0;transform:scaleX(0.9277) translateY(-50%);'>BUY MKT</div>
<div class='a' style='left:2887px;top:197px;font-size:28px;color:#f0f0f0;white-space:pre;line-height:1;transform-origin:0 0;transform:scaleX(0.9304) translateY(-50%);'>SELL MKT</div>
<div class='a' style='left:2686px;top:253px;font-size:28px;color:#f0f0f0;white-space:pre;line-height:1;transform-origin:0 0;transform:scaleX(0.9350) translateY(-50%);'>BUY LMT</div>
<div class='a' style='left:2887px;top:253px;font-size:28px;color:#f0f0f0;white-space:pre;line-height:1;transform-origin:0 0;transform:scaleX(0.9296) translateY(-50%);'>SELL LMT</div>
<svg class='a' style='left:3068px;top:181px;' width='18' height='28' viewBox='0 0 18 28'><path d='M3 2 L14 14 L3 26' stroke='#d8d8d8' stroke-width='2.6' fill='none'/></svg>
<div class='a' style='left:2646px;top:295px;width:190px;height:52px;background:#2e2f33;border:2px solid #3a3b3e'></div>
<div class='a' style='left:2852px;top:295px;width:190px;height:52px;background:#2e2f33;border:2px solid #3a3b3e'></div>
<svg class='a' style='left:2700px;top:304px;' width='31' height='38' viewBox='0 0 31 38'><path d='M15.5 1 L30 6.5 L30 19 Q30 31 15.5 37 Q1 31 1 19 L1 6.5 Z' fill='#b4b4b6'/><path d='M9 18.5 L14 23.5 L22 15' stroke='#2e2f33' stroke-width='3.4' fill='none'/></svg>
<div class='a' style='left:2744px;top:324px;font-size:28px;color:#e8e8e8;white-space:pre;line-height:1;transform-origin:0 0;transform:scaleX(0.9223) translateY(-50%);'>TP</div>
<svg class='a' style='left:2908px;top:304px;' width='31' height='38' viewBox='0 0 31 38'><path d='M15.5 1 L30 6.5 L30 19 Q30 31 15.5 37 Q1 31 1 19 L1 6.5 Z' fill='#b4b4b6'/><path d='M10.5 14 L20.5 24 M20.5 14 L10.5 24' stroke='#2e2f33' stroke-width='3.4'/></svg>
<div class='a' style='left:2952px;top:324px;font-size:28px;color:#e8e8e8;white-space:pre;line-height:1;transform-origin:0 0;transform:scaleX(0.9051) translateY(-50%);'>SL</div>
<div class='a' style='left:2646px;top:371px;width:190px;height:42px;background:#2e2f33;border:2px solid #3a3b3e'></div>
<div class='a' style='left:2852px;top:371px;width:190px;height:42px;background:#2e2f33;border:2px solid #3a3b3e'></div>
<div class='a' style='left:2646px;top:427px;width:190px;height:42px;background:#2e2f33;border:2px solid #3a3b3e'></div>
<div class='a' style='left:2852px;top:427px;width:190px;height:42px;background:#2e2f33;border:2px solid #3a3b3e'></div>
<div class='a' style='left:2676px;top:395px;font-size:28px;color:#e8e8e8;white-space:pre;line-height:1;transform-origin:0 0;transform:scaleX(0.9867) translateY(-50%);'>Снять пок.</div>
<div class='a' style='left:2871px;top:395px;font-size:28px;color:#e8e8e8;white-space:pre;line-height:1;transform-origin:0 0;transform:scaleX(0.9944) translateY(-50%);'>Снять прод.</div>
<div class='a' style='left:2679px;top:451px;font-size:28px;color:#e8e8e8;white-space:pre;line-height:1;transform-origin:0 0;transform:scaleX(0.9832) translateY(-50%);'>Снять все</div>
<div class='a' style='left:2873px;top:451px;font-size:28px;color:#e8e8e8;white-space:pre;line-height:1;transform-origin:0 0;transform:scaleX(1.0307) translateY(-50%);'>Развернуть</div>
<div class='a' style='left:2646px;top:494px;width:396px;height:41px;background:#437a3a;border:2px solid #3a3b3e'></div>
<div class='a' style='left:2784px;top:517px;font-size:28px;color:#e8e8e8;white-space:pre;line-height:1;transform-origin:0 0;transform:scaleX(0.9400) translateY(-50%);'>ЗАКРЫТЬ</div>
<div class='a' style='left:2646px;top:559px;width:198px;height:42px;background:#35363a;'></div>
<div class='a' style='left:2848px;top:559px;width:198px;height:42px;background:#35363a;'></div>
<div class='a' style='left:2646px;top:605px;width:400px;height:42px;background:#35363a;'></div>
<div class='a' style='left:2713px;top:581px;font-size:28px;color:#e8e8e8;white-space:pre;line-height:1;transform-origin:0 0;transform:scaleX(0.9490) translateY(-50%);'>FLAT</div>
<div class='a' style='left:2904px;top:581px;font-size:28px;color:#e8e8e8;white-space:pre;line-height:1;transform-origin:0 0;transform:scaleX(0.9110) translateY(-50%);'>ENTRY</div>
<div class='a' style='left:2822px;top:627px;font-size:28px;color:#e8e8e8;white-space:pre;line-height:1;transform-origin:0 0;transform:scaleX(0.9634) translateY(-50%);'>PnL</div>
<div class='a' style='left:2646px;top:668px;width:396px;height:40px;background:#1e1e1f;border:2px solid #3a3b3e'></div>
<div class='a' style='left:2656px;top:691.0px;font-size:28px;color:#77787b;white-space:pre;line-height:1;transform-origin:0 0;transform:scaleX(1.0059) translateY(-50%);'>Выберите счёт</div>
<svg class='a' style='left:3020px;top:685.0px;' width='18' height='11' viewBox='0 0 18 11'><path d='M2 2 L9 9 L16 2' stroke='#a8a8aa' stroke-width='2.4' fill='none'/></svg>
<div class='a' style='left:2646px;top:723px;width:329px;height:41px;background:#1e1e1f;border:2px solid #3a3b3e'></div>
<div class='a' style='left:2658px;top:746.5px;font-size:28px;color:#e8e8e8;white-space:pre;line-height:1;transform-origin:0 0;transform:scaleX(0.8989) translateY(-50%);'>1</div>
<svg class='a' style='left:2953px;top:740.5px;' width='18' height='11' viewBox='0 0 18 11'><path d='M2 2 L9 9 L16 2' stroke='#a8a8aa' stroke-width='2.4' fill='none'/></svg>
<div class='a' style='left:2987px;top:746px;font-size:28px;color:#e8e8e8;white-space:pre;line-height:1;transform-origin:0 0;transform:scaleX(0.9484) translateY(-50%);'>GMT</div>
<div class='a' style='left:2645px;top:801px;font-size:28px;color:#e8e8e8;white-space:pre;line-height:1;transform-origin:0 0;transform:scaleX(0.9902) translateY(-50%);'>Time In Force</div>
<div class='a' style='left:2824px;top:780px;width:218px;height:40px;background:#1e1e1f;border:2px solid #3a3b3e'></div>
<div class='a' style='left:2833px;top:803.0px;font-size:28px;color:#e8e8e8;white-space:pre;line-height:1;transform-origin:0 0;transform:scaleX(0.9010) translateY(-50%);'>DAY</div>
<svg class='a' style='left:3020px;top:797.0px;' width='18' height='11' viewBox='0 0 18 11'><path d='M2 2 L9 9 L16 2' stroke='#a8a8aa' stroke-width='2.4' fill='none'/></svg>
<div class='a' style='left:2646px;top:836px;width:396px;height:40px;background:#1e1e1f;border:2px solid #3a3b3e'></div>
<div class='a' style='left:2656px;top:859.0px;font-size:28px;color:#e8e8e8;white-space:pre;line-height:1;transform-origin:0 0;transform:scaleX(1.0251) translateY(-50%);'>Нет стратегии</div>
<svg class='a' style='left:3020px;top:853.0px;' width='18' height='11' viewBox='0 0 18 11'><path d='M2 2 L9 9 L16 2' stroke='#a8a8aa' stroke-width='2.4' fill='none'/></svg>
<div class='a' style='left:2646px;top:891px;width:66px;height:40px;background:#2e2f33;border:2px solid #3a3b3e'></div>
<div class='a' style='left:2728px;top:891px;width:68px;height:40px;background:#2e2f33;border:2px solid #3a3b3e'></div>
<div class='a' style='left:2812px;top:891px;width:68px;height:40px;background:#2e2f33;border:2px solid #3a3b3e'></div>
<div class='a' style='left:2896px;top:891px;width:66px;height:40px;background:#2e2f33;border:2px solid #3a3b3e'></div>
<div class='a' style='left:2976px;top:891px;width:66px;height:40px;background:#2e2f33;border:2px solid #3a3b3e'></div>
<svg class='a' style='left:2663px;top:898px;' width='36' height='30' viewBox='0 0 36 30'><path d='M4 15 L13 25 L32 4' stroke='#5aa37a' stroke-width='5.5' fill='none' stroke-linejoin='round' stroke-linecap='round'/></svg>
<svg class='a' style='left:2746px;top:896px;' width='36' height='34' viewBox='0 0 36 34'><path d='M18 3 V31 M4 17 H32' stroke='#5aa37a' stroke-width='6' stroke-linecap='round'/></svg>
<svg class='a' style='left:2831px;top:898px;' width='35' height='31' viewBox='0 0 35 31'><path d='M4 3 L31 28 M31 3 L4 28' stroke='#d0513a' stroke-width='5.5' stroke-linecap='round'/></svg>
<svg class='a' style='left:2913px;top:895px;' width='37' height='37' viewBox='0 0 37 37'><path d='M5.5 32 L19.5 18' stroke='#4b7fc0' stroke-width='7' stroke-linecap='round'/><circle cx='25' cy='12' r='9.5' fill='#4b7fc0'/><path d='M26 11 L37.5 -0.5' stroke='#2e2f33' stroke-width='6' stroke-linecap='round'/></svg>
<svg class='a' style='left:2993px;top:896px;' width='36' height='36' viewBox='0 0 36 36'><path d='M29.79 15.75 L34.88 16.00 L34.88 20.00 L29.79 20.25 L27.92 24.75 L31.35 28.52 L28.52 31.35 L24.75 27.92 L20.25 29.79 L20.00 34.88 L16.00 34.88 L15.75 29.79 L11.25 27.92 L7.48 31.35 L4.65 28.52 L8.08 24.75 L6.21 20.25 L1.12 20.00 L1.12 16.00 L6.21 15.75 L8.08 11.25 L4.65 7.48 L7.48 4.65 L11.25 8.08 L15.75 6.21 L16.00 1.12 L20.00 1.12 L20.25 6.21 L24.75 8.08 L28.52 4.65 L31.35 7.48 L27.92 11.25 Z' fill='#4b7fc0'/><circle cx='18' cy='18' r='12.8' fill='#4b7fc0'/><circle cx='18' cy='18' r='5.5' fill='#2e2f33'/></svg>
<div class='a' style='left:2646px;top:955px;width:396px;height:50px;background:#2a2b2e;border:2px solid #3a3b3e'></div>
<div class='a' style='left:2742px;top:983px;font-size:28px;color:#e8e8e8;white-space:pre;line-height:1;transform-origin:0 0;transform:scaleX(1.0210) translateY(-50%);'>Ввод заявки</div>
<svg class='a' style='left:3004px;top:975px;' width='22' height='14' viewBox='0 0 22 14'><path d='M2 2 L11 11 L20 2' stroke='#d8d8d8' stroke-width='2.8' fill='none'/></svg>
<div class='a' style='left:3079px;top:896px;transform:translate(-50%,-50%) rotate(-90deg) scaleX(1.01);white-space:pre;font-size:28px;line-height:1;color:#d8d8d8'>Торговый модуль</div>
<div class='a' style='left:2634px;top:1584px;width:464px;height:2px;background:#333438;'></div>
<div class='a' style='left:0px;top:1560px;width:2px;height:128px;background:#8ea3bd;'></div>
<div class='a' style='left:2px;top:1640px;width:2px;height:48px;background:#1f2023;'></div></body></html>
